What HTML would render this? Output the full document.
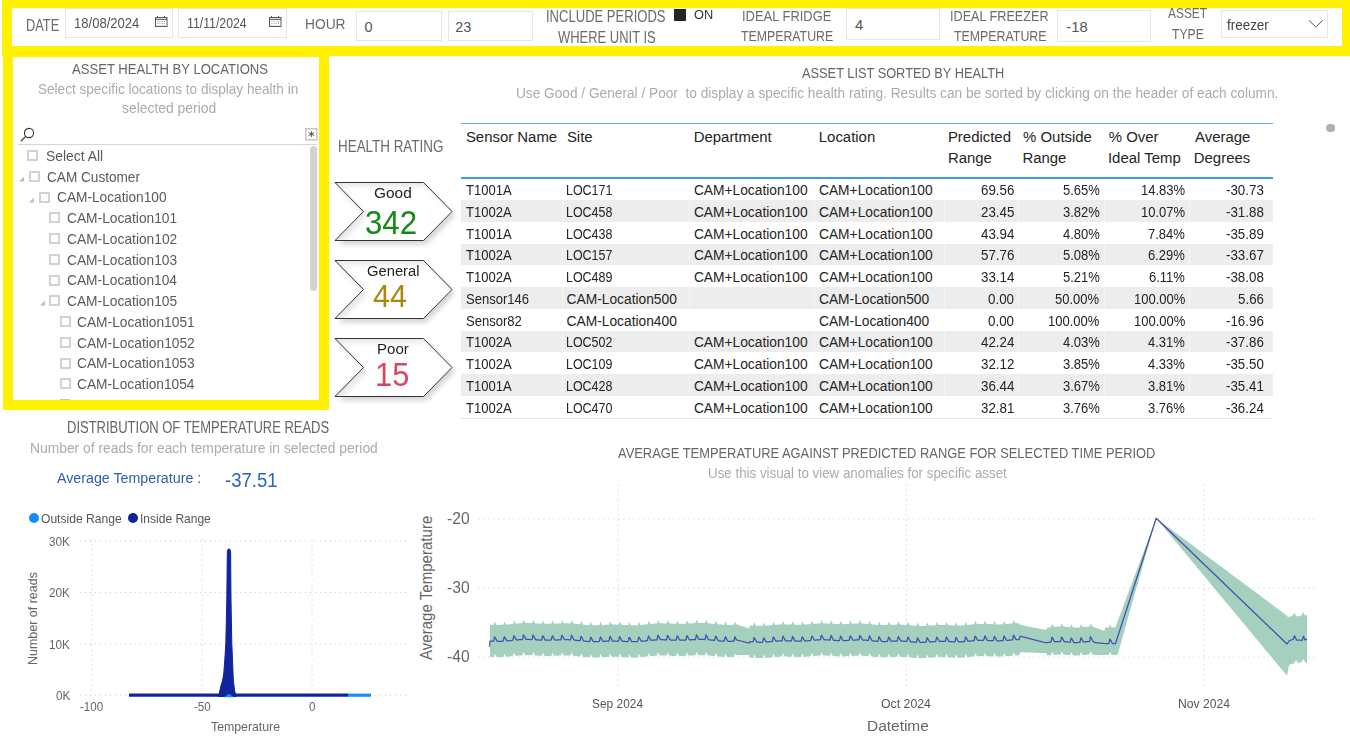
<!DOCTYPE html>
<html><head><meta charset="utf-8"><style>
html,body{margin:0;padding:0;width:1350px;height:740px;overflow:hidden;background:#fff}
.t{position:absolute;white-space:nowrap;line-height:0;font-family:"Liberation Sans",sans-serif;transform-origin:0 0}
.r{position:absolute}
svg{position:absolute;overflow:visible}
</style></head><body>
<div class="r" style="left:2px;top:0px;width:1348px;height:56px;background:#FFF100"></div>
<div class="r" style="left:12px;top:8px;width:1330px;height:38px;background:#fff"></div>
<div class="r" style="left:3px;top:46px;width:326px;height:364px;background:#FFF100"></div>
<div class="r" style="left:13px;top:56.5px;width:306px;height:343.5px;background:#fff"></div>
<div class="t" style="left:26.38px;top:26.00px;font-size:15.94px;color:#6b6b6b;transform:scaleX(0.8025);">DATE</div>
<div class="r" style="left:65px;top:8px;width:108px;height:30px;border:1px solid #e6e6e6;box-sizing:border-box;background:#fff"></div>
<div class="t" style="left:73.72px;top:23.00px;font-size:14.49px;color:#555;transform:scaleX(0.9012);">18/08/2024</div>
<div class="r" style="left:178px;top:8px;width:108.5px;height:30px;border:1px solid #e6e6e6;box-sizing:border-box;background:#fff"></div>
<div class="t" style="left:187.38px;top:23.00px;font-size:14.49px;color:#555;transform:scaleX(0.8483);">11/11/2024</div>
<div class="t" style="left:304.90px;top:24.00px;font-size:14.78px;color:#6b6b6b;transform:scaleX(0.9324);">HOUR</div>
<div class="r" style="left:356px;top:11px;width:86px;height:30px;border:1px solid #e6e6e6;box-sizing:border-box;background:#fff"></div>
<div class="t" style="left:364.42px;top:27.00px;font-size:14.49px;color:#555;">0</div>
<div class="r" style="left:447.5px;top:11px;width:85.5px;height:30px;border:1px solid #e6e6e6;box-sizing:border-box;background:#fff"></div>
<div class="t" style="left:455.28px;top:27.00px;font-size:14.49px;color:#555;">23</div>
<div class="t" style="left:546.23px;top:17.00px;font-size:15.94px;color:#6b6b6b;transform:scaleX(0.8183);">INCLUDE PERIODS</div>
<div class="t" style="left:557.74px;top:38.00px;font-size:15.94px;color:#6b6b6b;transform:scaleX(0.8129);">WHERE UNIT IS</div>
<div class="r" style="left:674px;top:9px;width:12px;height:12px;background:#252525"></div>
<div class="t" style="left:694.42px;top:15.00px;font-size:13.48px;color:#333;transform:scaleX(0.9497);">ON</div>
<div class="t" style="left:741.63px;top:16.00px;font-size:15.36px;color:#6b6b6b;transform:scaleX(0.8426);">IDEAL FRIDGE</div>
<div class="t" style="left:741.35px;top:36.00px;font-size:15.36px;color:#6b6b6b;transform:scaleX(0.8018);">TEMPERATURE</div>
<div class="r" style="left:846px;top:8px;width:93.5px;height:31.5px;border:1px solid #e6e6e6;box-sizing:border-box;background:#fff"></div>
<div class="t" style="left:854.90px;top:25.00px;font-size:14.78px;color:#555;">4</div>
<div class="t" style="left:950.46px;top:16.00px;font-size:15.36px;color:#6b6b6b;transform:scaleX(0.8226);">IDEAL FREEZER</div>
<div class="t" style="left:954.15px;top:36.00px;font-size:15.36px;color:#6b6b6b;transform:scaleX(0.8053);">TEMPERATURE</div>
<div class="r" style="left:1057px;top:10px;width:94px;height:32px;border:1px solid #e6e6e6;box-sizing:border-box;background:#fff"></div>
<div class="t" style="left:1066.33px;top:27.00px;font-size:14.78px;color:#555;">-18</div>
<div class="t" style="left:1167.80px;top:13.00px;font-size:15.36px;color:#6b6b6b;transform:scaleX(0.7767);">ASSET</div>
<div class="t" style="left:1171.96px;top:34.00px;font-size:15.36px;color:#6b6b6b;transform:scaleX(0.7939);">TYPE</div>
<div class="r" style="left:1221px;top:10px;width:107px;height:27.5px;border:1px solid #e6e6e6;box-sizing:border-box;background:#fff"></div>
<div class="r" style="left:2px;top:0px;width:1348px;height:8px;background:#FFF100"></div>
<div class="t" style="left:1227.20px;top:25.00px;font-size:14.49px;color:#444;transform:scaleX(0.9275);">freezer</div>
<svg style="left:155px;top:16px" width="14" height="12" viewBox="0 0 14 12"><rect x="0.5" y="1.5" width="11.5" height="9" fill="none" stroke="#5a5a5a" stroke-width="1"/><line x1="0.5" y1="3.3" x2="12" y2="3.3" stroke="#444" stroke-width="1"/><line x1="2.5" y1="0" x2="2.5" y2="2" stroke="#5a5a5a" stroke-width="1"/><line x1="9.5" y1="0" x2="9.5" y2="2" stroke="#5a5a5a" stroke-width="1"/><line x1="2.8" y1="5" x2="2.8" y2="9.5" stroke="#8a8a9a" stroke-width="0.8" stroke-dasharray="1 1"/><line x1="5.0" y1="5" x2="5.0" y2="9.5" stroke="#8a8a9a" stroke-width="0.8" stroke-dasharray="1 1"/><line x1="7.2" y1="5" x2="7.2" y2="9.5" stroke="#8a8a9a" stroke-width="0.8" stroke-dasharray="1 1"/><line x1="9.4" y1="5" x2="9.4" y2="9.5" stroke="#8a8a9a" stroke-width="0.8" stroke-dasharray="1 1"/></svg>
<svg style="left:269px;top:16px" width="14" height="12" viewBox="0 0 14 12"><rect x="0.5" y="1.5" width="11.5" height="9" fill="none" stroke="#5a5a5a" stroke-width="1"/><line x1="0.5" y1="3.3" x2="12" y2="3.3" stroke="#444" stroke-width="1"/><line x1="2.5" y1="0" x2="2.5" y2="2" stroke="#5a5a5a" stroke-width="1"/><line x1="9.5" y1="0" x2="9.5" y2="2" stroke="#5a5a5a" stroke-width="1"/><line x1="2.8" y1="5" x2="2.8" y2="9.5" stroke="#8a8a9a" stroke-width="0.8" stroke-dasharray="1 1"/><line x1="5.0" y1="5" x2="5.0" y2="9.5" stroke="#8a8a9a" stroke-width="0.8" stroke-dasharray="1 1"/><line x1="7.2" y1="5" x2="7.2" y2="9.5" stroke="#8a8a9a" stroke-width="0.8" stroke-dasharray="1 1"/><line x1="9.4" y1="5" x2="9.4" y2="9.5" stroke="#8a8a9a" stroke-width="0.8" stroke-dasharray="1 1"/></svg>
<svg style="left:1305px;top:16px" width="22" height="14"><polyline points="4,4.5 10.8,11 17.6,4.5" fill="none" stroke="#555" stroke-width="1"/></svg>
<div class="t" style="left:71.75px;top:69.00px;font-size:14.49px;color:#666;transform:scaleX(0.9029);">ASSET HEALTH BY LOCATIONS</div>
<div class="t" style="left:38.39px;top:89.00px;font-size:14.78px;color:#ababab;transform:scaleX(0.9190);">Select specific locations to display health in</div>
<div class="t" style="left:121.58px;top:108.00px;font-size:14.78px;color:#ababab;transform:scaleX(0.9411);">selected period</div>
<svg style="left:19px;top:126px" width="18" height="18"><circle cx="10" cy="7" r="4.6" fill="none" stroke="#333" stroke-width="1.1"/><line x1="6.7" y1="10.3" x2="2" y2="15" stroke="#333" stroke-width="1.2"/></svg>
<svg style="left:305px;top:128px" width="14" height="14"><rect x="0.75" y="0.75" width="11" height="11" fill="#fff" stroke="#c6c6c6" stroke-width="1.5"/><path d="M6.4 3.2V9M3.6 4.5L9.2 7.7M3.6 7.7L9.2 4.5" stroke="#444" stroke-width="0.9"/></svg>
<div class="r" style="left:18px;top:144px;width:299px;height:1px;background:#d6d6d6"></div>
<div class="r" style="left:27px;top:150px;width:11px;height:11px;border:2px solid #d2d2d2;box-sizing:border-box"></div>
<div class="t" style="left:45.67px;top:156.00px;font-size:14.20px;color:#5a5a5a;transform:scaleX(0.9787);">Select All</div>
<div class="r" style="left:29px;top:171px;width:11px;height:11px;border:2px solid #d2d2d2;box-sizing:border-box"></div>
<svg style="left:18.0px;top:175.5px" width="8" height="8"><polygon points="6,0.5 6,5.5 1,5.5" fill="#c0c0c0"/></svg>
<div class="t" style="left:46.52px;top:177.00px;font-size:14.20px;color:#5a5a5a;transform:scaleX(0.9586);">CAM Customer</div>
<div class="r" style="left:39px;top:192px;width:11px;height:11px;border:2px solid #d2d2d2;box-sizing:border-box"></div>
<svg style="left:28.3px;top:196.5px" width="8" height="8"><polygon points="6,0.5 6,5.5 1,5.5" fill="#c0c0c0"/></svg>
<div class="t" style="left:56.82px;top:197.00px;font-size:14.20px;color:#5a5a5a;transform:scaleX(0.9646);">CAM-Location100</div>
<div class="r" style="left:49px;top:212px;width:11px;height:11px;border:2px solid #d2d2d2;box-sizing:border-box"></div>
<div class="t" style="left:67.11px;top:218.00px;font-size:14.20px;color:#5a5a5a;transform:scaleX(0.9702);">CAM-Location101</div>
<div class="r" style="left:49px;top:233px;width:11px;height:11px;border:2px solid #d2d2d2;box-sizing:border-box"></div>
<div class="t" style="left:67.11px;top:239.00px;font-size:14.20px;color:#5a5a5a;transform:scaleX(0.9708);">CAM-Location102</div>
<div class="r" style="left:49px;top:254px;width:11px;height:11px;border:2px solid #d2d2d2;box-sizing:border-box"></div>
<div class="t" style="left:67.11px;top:260.00px;font-size:14.20px;color:#5a5a5a;transform:scaleX(0.9696);">CAM-Location103</div>
<div class="r" style="left:49px;top:275px;width:11px;height:11px;border:2px solid #d2d2d2;box-sizing:border-box"></div>
<div class="t" style="left:67.11px;top:280.00px;font-size:14.20px;color:#5a5a5a;transform:scaleX(0.9684);">CAM-Location104</div>
<div class="r" style="left:49px;top:295px;width:11px;height:11px;border:2px solid #d2d2d2;box-sizing:border-box"></div>
<svg style="left:38.6px;top:300.1px" width="8" height="8"><polygon points="6,0.5 6,5.5 1,5.5" fill="#c0c0c0"/></svg>
<div class="t" style="left:67.11px;top:301.00px;font-size:14.20px;color:#5a5a5a;transform:scaleX(0.9696);">CAM-Location105</div>
<div class="r" style="left:60px;top:316px;width:11px;height:11px;border:2px solid #d2d2d2;box-sizing:border-box"></div>
<div class="t" style="left:77.41px;top:322.00px;font-size:14.20px;color:#5a5a5a;transform:scaleX(0.9690);">CAM-Location1051</div>
<div class="r" style="left:60px;top:337px;width:11px;height:11px;border:2px solid #d2d2d2;box-sizing:border-box"></div>
<div class="t" style="left:77.41px;top:343.00px;font-size:14.20px;color:#5a5a5a;transform:scaleX(0.9696);">CAM-Location1052</div>
<div class="r" style="left:60px;top:358px;width:11px;height:11px;border:2px solid #d2d2d2;box-sizing:border-box"></div>
<div class="t" style="left:77.41px;top:363.00px;font-size:14.20px;color:#5a5a5a;transform:scaleX(0.9684);">CAM-Location1053</div>
<div class="r" style="left:60px;top:378px;width:11px;height:11px;border:2px solid #d2d2d2;box-sizing:border-box"></div>
<div class="t" style="left:77.41px;top:384.00px;font-size:14.20px;color:#5a5a5a;transform:scaleX(0.9673);">CAM-Location1054</div>
<div class="r" style="left:59.5px;top:399px;width:10px;height:1.5px;background:#c4c4c4"></div>
<div class="r" style="left:310px;top:146px;width:7px;height:145px;background:#d2d2d2;border-radius:3.5px"></div>
<div class="r" style="left:3px;top:400px;width:326px;height:10px;background:#FFF100"></div>
<div class="t" style="left:337.83px;top:147.00px;font-size:15.94px;color:#6b6b6b;transform:scaleX(0.8415);">HEALTH RATING</div>
<svg style="left:0;top:0" width="1350" height="740"><defs><filter id="sh" x="-20%" y="-20%" width="150%" height="160%"><feGaussianBlur in="SourceAlpha" stdDeviation="2.6"/><feOffset dx="3" dy="4"/><feComponentTransfer><feFuncA type="linear" slope="0.17"/></feComponentTransfer><feMerge><feMergeNode/><feMergeNode in="SourceGraphic"/></feMerge></filter><filter id="ish" x="-10%" y="-10%" width="120%" height="120%"><feGaussianBlur in="SourceAlpha" stdDeviation="2.5"/><feOffset dx="4" dy="4" result="b"/><feComposite in="SourceAlpha" in2="b" operator="out" result="e"/><feFlood flood-color="#000" flood-opacity="0.09"/><feComposite in2="e" operator="in"/></filter></defs><polygon filter="url(#sh)" points="335,182.5 423.5,182.5 452,211.5 423.5,240.5 335,240.5 363.5,211.5" fill="#fff"/><polygon filter="url(#ish)" points="335,182.5 423.5,182.5 452,211.5 423.5,240.5 335,240.5 363.5,211.5" fill="#000"/><polygon points="335,182.5 423.5,182.5 452,211.5 423.5,240.5 335,240.5 363.5,211.5" fill="none" stroke="#333" stroke-width="1"/><polygon filter="url(#sh)" points="335,260.5 423.5,260.5 452,289.5 423.5,318.5 335,318.5 363.5,289.5" fill="#fff"/><polygon filter="url(#ish)" points="335,260.5 423.5,260.5 452,289.5 423.5,318.5 335,318.5 363.5,289.5" fill="#000"/><polygon points="335,260.5 423.5,260.5 452,289.5 423.5,318.5 335,318.5 363.5,289.5" fill="none" stroke="#333" stroke-width="1"/><polygon filter="url(#sh)" points="335,338.5 423.5,338.5 452,367.5 423.5,396.5 335,396.5 363.5,367.5" fill="#fff"/><polygon filter="url(#ish)" points="335,338.5 423.5,338.5 452,367.5 423.5,396.5 335,396.5 363.5,367.5" fill="#000"/><polygon points="335,338.5 423.5,338.5 452,367.5 423.5,396.5 335,396.5 363.5,367.5" fill="none" stroke="#333" stroke-width="1"/></svg>
<div class="t" style="left:374.23px;top:193.00px;font-size:14.93px;color:#252423;transform:scaleX(1.0350);">Good</div>
<div class="t" style="left:364.95px;top:223.00px;font-size:33.19px;color:#138a13;transform:scaleX(0.9412);">342</div>
<div class="t" style="left:366.76px;top:271.00px;font-size:14.93px;color:#252423;transform:scaleX(0.9893);">General</div>
<div class="t" style="left:372.99px;top:296.00px;font-size:31.88px;color:#a8880e;transform:scaleX(0.9587);">44</div>
<div class="t" style="left:376.70px;top:349.00px;font-size:14.93px;color:#252423;transform:scaleX(1.0073);">Poor</div>
<div class="t" style="left:375.19px;top:375.00px;font-size:33.19px;color:#d8465f;transform:scaleX(0.9297);">15</div>
<div class="t" style="left:801.60px;top:73.00px;font-size:14.78px;color:#666;transform:scaleX(0.8667);">ASSET LIST SORTED BY HEALTH</div>
<div class="t" style="left:515.97px;top:93.00px;font-size:15.22px;color:#ababab;transform:scaleX(0.8985);">Use Good / General / Poor  to display a specific health rating. Results can be sorted by clicking on the header of each column.</div>
<div class="r" style="left:461px;top:123px;width:812px;height:1px;background:#5aa9f2"></div>
<div class="r" style="left:461px;top:177px;width:812px;height:2.3000000000000114px;background:#3a98ee"></div>
<div class="t" style="left:465.93px;top:137.00px;font-size:14.93px;color:#252423;">Sensor Name</div>
<div class="t" style="left:566.93px;top:137.00px;font-size:14.93px;color:#252423;">Site</div>
<div class="t" style="left:693.71px;top:137.00px;font-size:14.93px;color:#252423;">Department</div>
<div class="t" style="left:818.81px;top:137.00px;font-size:14.93px;color:#252423;">Location</div>
<div class="t" style="left:947.91px;top:137.00px;font-size:14.93px;color:#252423;">Predicted</div>
<div class="t" style="left:947.91px;top:158.00px;font-size:14.93px;color:#252423;">Range</div>
<div class="t" style="left:1023.08px;top:137.00px;font-size:14.93px;color:#252423;">% Outside</div>
<div class="t" style="left:1022.41px;top:158.00px;font-size:14.93px;color:#252423;">Range</div>
<div class="t" style="left:1108.78px;top:137.00px;font-size:14.93px;color:#252423;">% Over</div>
<div class="t" style="left:1107.96px;top:158.00px;font-size:14.93px;color:#252423;">Ideal Temp</div>
<div class="t" style="left:1195.00px;top:137.00px;font-size:14.93px;color:#252423;">Average</div>
<div class="t" style="left:1193.81px;top:158.00px;font-size:14.93px;color:#252423;">Degrees</div>
<div class="t" style="left:466.04px;top:191.00px;font-size:13.77px;color:#252423;transform:scaleX(0.9470);">T1001A</div>
<div class="t" style="left:566.30px;top:191.00px;font-size:13.77px;color:#252423;transform:scaleX(0.9050);">LOC171</div>
<div class="t" style="left:693.91px;top:191.00px;font-size:13.77px;color:#252423;">CAM+Location100</div>
<div class="t" style="left:819.01px;top:191.00px;font-size:13.77px;color:#252423;">CAM+Location100</div>
<div class="t" style="left:980.65px;top:191.00px;font-size:13.77px;color:#252423;transform:scaleX(0.9700);">69.56</div>
<div class="t" style="left:1062.77px;top:191.00px;font-size:13.77px;color:#252423;transform:scaleX(0.9450);">5.65%</div>
<div class="t" style="left:1141.18px;top:191.00px;font-size:13.77px;color:#252423;transform:scaleX(0.9450);">14.83%</div>
<div class="t" style="left:1225.67px;top:191.00px;font-size:13.77px;color:#252423;transform:scaleX(0.9700);">-30.73</div>
<div class="r" style="left:461px;top:200.0px;width:812px;height:21.75px;background:#ededed"></div>
<div class="r" style="left:562px;top:200.0px;width:1px;height:21.75px;background:#f6f6f6"></div>
<div class="r" style="left:689.3px;top:200.0px;width:1.0px;height:21.75px;background:#f6f6f6"></div>
<div class="r" style="left:814.4px;top:200.0px;width:1.0px;height:21.75px;background:#f6f6f6"></div>
<div class="r" style="left:943.5px;top:200.0px;width:1.0px;height:21.75px;background:#f6f6f6"></div>
<div class="r" style="left:1018px;top:200.0px;width:1px;height:21.75px;background:#f6f6f6"></div>
<div class="r" style="left:1103.7px;top:200.0px;width:1.0px;height:21.75px;background:#f6f6f6"></div>
<div class="r" style="left:1189.4px;top:200.0px;width:1.0px;height:21.75px;background:#f6f6f6"></div>
<div class="t" style="left:466.04px;top:213.00px;font-size:13.77px;color:#252423;transform:scaleX(0.9470);">T1002A</div>
<div class="t" style="left:566.30px;top:213.00px;font-size:13.77px;color:#252423;transform:scaleX(0.9050);">LOC458</div>
<div class="t" style="left:693.91px;top:213.00px;font-size:13.77px;color:#252423;">CAM+Location100</div>
<div class="t" style="left:819.01px;top:213.00px;font-size:13.77px;color:#252423;">CAM+Location100</div>
<div class="t" style="left:980.65px;top:213.00px;font-size:13.77px;color:#252423;transform:scaleX(0.9700);">23.45</div>
<div class="t" style="left:1062.77px;top:213.00px;font-size:13.77px;color:#252423;transform:scaleX(0.9450);">3.82%</div>
<div class="t" style="left:1141.18px;top:213.00px;font-size:13.77px;color:#252423;transform:scaleX(0.9450);">10.07%</div>
<div class="t" style="left:1225.67px;top:213.00px;font-size:13.77px;color:#252423;transform:scaleX(0.9700);">-31.88</div>
<div class="t" style="left:466.04px;top:235.00px;font-size:13.77px;color:#252423;transform:scaleX(0.9470);">T1001A</div>
<div class="t" style="left:566.30px;top:235.00px;font-size:13.77px;color:#252423;transform:scaleX(0.9050);">LOC438</div>
<div class="t" style="left:693.91px;top:235.00px;font-size:13.77px;color:#252423;">CAM+Location100</div>
<div class="t" style="left:819.01px;top:235.00px;font-size:13.77px;color:#252423;">CAM+Location100</div>
<div class="t" style="left:980.51px;top:235.00px;font-size:13.77px;color:#252423;transform:scaleX(0.9700);">43.94</div>
<div class="t" style="left:1062.77px;top:235.00px;font-size:13.77px;color:#252423;transform:scaleX(0.9450);">4.80%</div>
<div class="t" style="left:1148.47px;top:235.00px;font-size:13.77px;color:#252423;transform:scaleX(0.9450);">7.84%</div>
<div class="t" style="left:1225.74px;top:235.00px;font-size:13.77px;color:#252423;transform:scaleX(0.9700);">-35.89</div>
<div class="r" style="left:461px;top:243.5px;width:812px;height:21.75px;background:#ededed"></div>
<div class="r" style="left:562px;top:243.5px;width:1px;height:21.75px;background:#f6f6f6"></div>
<div class="r" style="left:689.3px;top:243.5px;width:1.0px;height:21.75px;background:#f6f6f6"></div>
<div class="r" style="left:814.4px;top:243.5px;width:1.0px;height:21.75px;background:#f6f6f6"></div>
<div class="r" style="left:943.5px;top:243.5px;width:1.0px;height:21.75px;background:#f6f6f6"></div>
<div class="r" style="left:1018px;top:243.5px;width:1px;height:21.75px;background:#f6f6f6"></div>
<div class="r" style="left:1103.7px;top:243.5px;width:1.0px;height:21.75px;background:#f6f6f6"></div>
<div class="r" style="left:1189.4px;top:243.5px;width:1.0px;height:21.75px;background:#f6f6f6"></div>
<div class="t" style="left:466.04px;top:256.00px;font-size:13.77px;color:#252423;transform:scaleX(0.9470);">T1002A</div>
<div class="t" style="left:566.30px;top:256.00px;font-size:13.77px;color:#252423;transform:scaleX(0.9050);">LOC157</div>
<div class="t" style="left:693.91px;top:256.00px;font-size:13.77px;color:#252423;">CAM+Location100</div>
<div class="t" style="left:819.01px;top:256.00px;font-size:13.77px;color:#252423;">CAM+Location100</div>
<div class="t" style="left:980.65px;top:256.00px;font-size:13.77px;color:#252423;transform:scaleX(0.9700);">57.76</div>
<div class="t" style="left:1062.77px;top:256.00px;font-size:13.77px;color:#252423;transform:scaleX(0.9450);">5.08%</div>
<div class="t" style="left:1148.47px;top:256.00px;font-size:13.77px;color:#252423;transform:scaleX(0.9450);">6.29%</div>
<div class="t" style="left:1225.81px;top:256.00px;font-size:13.77px;color:#252423;transform:scaleX(0.9700);">-33.67</div>
<div class="t" style="left:466.04px;top:278.00px;font-size:13.77px;color:#252423;transform:scaleX(0.9470);">T1002A</div>
<div class="t" style="left:566.30px;top:278.00px;font-size:13.77px;color:#252423;transform:scaleX(0.9050);">LOC489</div>
<div class="t" style="left:693.91px;top:278.00px;font-size:13.77px;color:#252423;">CAM+Location100</div>
<div class="t" style="left:819.01px;top:278.00px;font-size:13.77px;color:#252423;">CAM+Location100</div>
<div class="t" style="left:980.51px;top:278.00px;font-size:13.77px;color:#252423;transform:scaleX(0.9700);">33.14</div>
<div class="t" style="left:1062.77px;top:278.00px;font-size:13.77px;color:#252423;transform:scaleX(0.9450);">5.21%</div>
<div class="t" style="left:1149.45px;top:278.00px;font-size:13.77px;color:#252423;transform:scaleX(0.9450);">6.11%</div>
<div class="t" style="left:1225.67px;top:278.00px;font-size:13.77px;color:#252423;transform:scaleX(0.9700);">-38.08</div>
<div class="r" style="left:461px;top:287.0px;width:812px;height:21.75px;background:#ededed"></div>
<div class="r" style="left:562px;top:287.0px;width:1px;height:21.75px;background:#f6f6f6"></div>
<div class="r" style="left:689.3px;top:287.0px;width:1.0px;height:21.75px;background:#f6f6f6"></div>
<div class="r" style="left:814.4px;top:287.0px;width:1.0px;height:21.75px;background:#f6f6f6"></div>
<div class="r" style="left:943.5px;top:287.0px;width:1.0px;height:21.75px;background:#f6f6f6"></div>
<div class="r" style="left:1018px;top:287.0px;width:1px;height:21.75px;background:#f6f6f6"></div>
<div class="r" style="left:1103.7px;top:287.0px;width:1.0px;height:21.75px;background:#f6f6f6"></div>
<div class="r" style="left:1189.4px;top:287.0px;width:1.0px;height:21.75px;background:#f6f6f6"></div>
<div class="t" style="left:465.71px;top:300.00px;font-size:13.77px;color:#252423;transform:scaleX(0.9470);">Sensor146</div>
<div class="t" style="left:566.61px;top:300.00px;font-size:13.77px;color:#252423;">CAM-Location500</div>
<div class="t" style="left:819.01px;top:300.00px;font-size:13.77px;color:#252423;">CAM-Location500</div>
<div class="t" style="left:987.99px;top:300.00px;font-size:13.77px;color:#252423;transform:scaleX(0.9700);">0.00</div>
<div class="t" style="left:1055.48px;top:300.00px;font-size:13.77px;color:#252423;transform:scaleX(0.9450);">50.00%</div>
<div class="t" style="left:1133.96px;top:300.00px;font-size:13.77px;color:#252423;transform:scaleX(0.9450);">100.00%</div>
<div class="t" style="left:1237.56px;top:300.00px;font-size:13.77px;color:#252423;transform:scaleX(0.9700);">5.66</div>
<div class="t" style="left:465.71px;top:322.00px;font-size:13.77px;color:#252423;transform:scaleX(0.9470);">Sensor82</div>
<div class="t" style="left:566.61px;top:322.00px;font-size:13.77px;color:#252423;">CAM-Location400</div>
<div class="t" style="left:819.01px;top:322.00px;font-size:13.77px;color:#252423;">CAM-Location400</div>
<div class="t" style="left:987.99px;top:322.00px;font-size:13.77px;color:#252423;transform:scaleX(0.9700);">0.00</div>
<div class="t" style="left:1048.26px;top:322.00px;font-size:13.77px;color:#252423;transform:scaleX(0.9450);">100.00%</div>
<div class="t" style="left:1133.96px;top:322.00px;font-size:13.77px;color:#252423;transform:scaleX(0.9450);">100.00%</div>
<div class="t" style="left:1225.67px;top:322.00px;font-size:13.77px;color:#252423;transform:scaleX(0.9700);">-16.96</div>
<div class="r" style="left:461px;top:330.5px;width:812px;height:21.75px;background:#ededed"></div>
<div class="r" style="left:562px;top:330.5px;width:1px;height:21.75px;background:#f6f6f6"></div>
<div class="r" style="left:689.3px;top:330.5px;width:1.0px;height:21.75px;background:#f6f6f6"></div>
<div class="r" style="left:814.4px;top:330.5px;width:1.0px;height:21.75px;background:#f6f6f6"></div>
<div class="r" style="left:943.5px;top:330.5px;width:1.0px;height:21.75px;background:#f6f6f6"></div>
<div class="r" style="left:1018px;top:330.5px;width:1px;height:21.75px;background:#f6f6f6"></div>
<div class="r" style="left:1103.7px;top:330.5px;width:1.0px;height:21.75px;background:#f6f6f6"></div>
<div class="r" style="left:1189.4px;top:330.5px;width:1.0px;height:21.75px;background:#f6f6f6"></div>
<div class="t" style="left:466.04px;top:343.00px;font-size:13.77px;color:#252423;transform:scaleX(0.9470);">T1002A</div>
<div class="t" style="left:566.30px;top:343.00px;font-size:13.77px;color:#252423;transform:scaleX(0.9050);">LOC502</div>
<div class="t" style="left:693.91px;top:343.00px;font-size:13.77px;color:#252423;">CAM+Location100</div>
<div class="t" style="left:819.01px;top:343.00px;font-size:13.77px;color:#252423;">CAM+Location100</div>
<div class="t" style="left:980.51px;top:343.00px;font-size:13.77px;color:#252423;transform:scaleX(0.9700);">42.24</div>
<div class="t" style="left:1062.77px;top:343.00px;font-size:13.77px;color:#252423;transform:scaleX(0.9450);">4.03%</div>
<div class="t" style="left:1148.47px;top:343.00px;font-size:13.77px;color:#252423;transform:scaleX(0.9450);">4.31%</div>
<div class="t" style="left:1225.67px;top:343.00px;font-size:13.77px;color:#252423;transform:scaleX(0.9700);">-37.86</div>
<div class="t" style="left:466.04px;top:365.00px;font-size:13.77px;color:#252423;transform:scaleX(0.9470);">T1002A</div>
<div class="t" style="left:566.30px;top:365.00px;font-size:13.77px;color:#252423;transform:scaleX(0.9050);">LOC109</div>
<div class="t" style="left:693.91px;top:365.00px;font-size:13.77px;color:#252423;">CAM+Location100</div>
<div class="t" style="left:819.01px;top:365.00px;font-size:13.77px;color:#252423;">CAM+Location100</div>
<div class="t" style="left:980.78px;top:365.00px;font-size:13.77px;color:#252423;transform:scaleX(0.9700);">32.12</div>
<div class="t" style="left:1062.77px;top:365.00px;font-size:13.77px;color:#252423;transform:scaleX(0.9450);">3.85%</div>
<div class="t" style="left:1148.47px;top:365.00px;font-size:13.77px;color:#252423;transform:scaleX(0.9450);">4.33%</div>
<div class="t" style="left:1225.61px;top:365.00px;font-size:13.77px;color:#252423;transform:scaleX(0.9700);">-35.50</div>
<div class="r" style="left:461px;top:374.0px;width:812px;height:21.75px;background:#ededed"></div>
<div class="r" style="left:562px;top:374.0px;width:1px;height:21.75px;background:#f6f6f6"></div>
<div class="r" style="left:689.3px;top:374.0px;width:1.0px;height:21.75px;background:#f6f6f6"></div>
<div class="r" style="left:814.4px;top:374.0px;width:1.0px;height:21.75px;background:#f6f6f6"></div>
<div class="r" style="left:943.5px;top:374.0px;width:1.0px;height:21.75px;background:#f6f6f6"></div>
<div class="r" style="left:1018px;top:374.0px;width:1px;height:21.75px;background:#f6f6f6"></div>
<div class="r" style="left:1103.7px;top:374.0px;width:1.0px;height:21.75px;background:#f6f6f6"></div>
<div class="r" style="left:1189.4px;top:374.0px;width:1.0px;height:21.75px;background:#f6f6f6"></div>
<div class="t" style="left:466.04px;top:387.00px;font-size:13.77px;color:#252423;transform:scaleX(0.9470);">T1001A</div>
<div class="t" style="left:566.30px;top:387.00px;font-size:13.77px;color:#252423;transform:scaleX(0.9050);">LOC428</div>
<div class="t" style="left:693.91px;top:387.00px;font-size:13.77px;color:#252423;">CAM+Location100</div>
<div class="t" style="left:819.01px;top:387.00px;font-size:13.77px;color:#252423;">CAM+Location100</div>
<div class="t" style="left:980.51px;top:387.00px;font-size:13.77px;color:#252423;transform:scaleX(0.9700);">36.44</div>
<div class="t" style="left:1062.77px;top:387.00px;font-size:13.77px;color:#252423;transform:scaleX(0.9450);">3.67%</div>
<div class="t" style="left:1148.47px;top:387.00px;font-size:13.77px;color:#252423;transform:scaleX(0.9450);">3.81%</div>
<div class="t" style="left:1225.74px;top:387.00px;font-size:13.77px;color:#252423;transform:scaleX(0.9700);">-35.41</div>
<div class="t" style="left:466.04px;top:409.00px;font-size:13.77px;color:#252423;transform:scaleX(0.9470);">T1002A</div>
<div class="t" style="left:566.30px;top:409.00px;font-size:13.77px;color:#252423;transform:scaleX(0.9050);">LOC470</div>
<div class="t" style="left:693.91px;top:409.00px;font-size:13.77px;color:#252423;">CAM+Location100</div>
<div class="t" style="left:819.01px;top:409.00px;font-size:13.77px;color:#252423;">CAM+Location100</div>
<div class="t" style="left:980.71px;top:409.00px;font-size:13.77px;color:#252423;transform:scaleX(0.9700);">32.81</div>
<div class="t" style="left:1062.77px;top:409.00px;font-size:13.77px;color:#252423;transform:scaleX(0.9450);">3.76%</div>
<div class="t" style="left:1148.47px;top:409.00px;font-size:13.77px;color:#252423;transform:scaleX(0.9450);">3.76%</div>
<div class="t" style="left:1225.54px;top:409.00px;font-size:13.77px;color:#252423;transform:scaleX(0.9700);">-36.24</div>
<div class="r" style="left:461px;top:417.5px;width:812px;height:1.0px;background:#e4e4e4"></div>
<div class="r" style="left:1326px;top:123.5px;width:8.6px;height:8.6px;border-radius:50%;background:#b0b0b0"></div>
<div class="t" style="left:67.46px;top:428.00px;font-size:15.65px;color:#666;transform:scaleX(0.8303);">DISTRIBUTION OF TEMPERATURE READS</div>
<div class="t" style="left:29.99px;top:448.00px;font-size:15.07px;color:#ababab;transform:scaleX(0.9190);">Number of reads for each temperature in selected period</div>
<div class="t" style="left:57.00px;top:478.00px;font-size:15.07px;color:#2f5cae;transform:scaleX(0.9445);">Average Temperature :</div>
<div class="t" style="left:225.16px;top:480.00px;font-size:20.58px;color:#2866c0;transform:scaleX(0.9028);">-37.51</div>
<div class="r" style="left:28.9px;top:513px;width:10px;height:10px;border-radius:50%;background:#118dff"></div>
<div class="t" style="left:41.36px;top:519.00px;font-size:12.46px;color:#555;transform:scaleX(0.9706);">Outside Range</div>
<div class="r" style="left:127.5px;top:513px;width:10px;height:10px;border-radius:50%;background:#12239e"></div>
<div class="t" style="left:139.62px;top:519.00px;font-size:12.46px;color:#555;transform:scaleX(0.9647);">Inside Range</div>
<svg style="left:0;top:0" width="1350" height="740"><line x1="80" y1="541.1" x2="407.6" y2="541.1" stroke="#c8c8c8" stroke-width="1" stroke-dasharray="1 4" fill="none"/><line x1="80" y1="592.5" x2="407.6" y2="592.5" stroke="#c8c8c8" stroke-width="1" stroke-dasharray="1 4" fill="none"/><line x1="80" y1="643.8" x2="407.6" y2="643.8" stroke="#c8c8c8" stroke-width="1" stroke-dasharray="1 4" fill="none"/><line x1="80" y1="695.2" x2="407.6" y2="695.2" stroke="#c8c8c8" stroke-width="1" stroke-dasharray="1 4" fill="none"/><line x1="91.7" y1="539.5" x2="91.7" y2="695" stroke="#c8c8c8" stroke-width="1" stroke-dasharray="1 4" fill="none"/><line x1="202.2" y1="539.5" x2="202.2" y2="695" stroke="#c8c8c8" stroke-width="1" stroke-dasharray="1 4" fill="none"/><line x1="312" y1="539.5" x2="312" y2="695" stroke="#c8c8c8" stroke-width="1" stroke-dasharray="1 4" fill="none"/><polyline points="129,695.2 348,695.2" stroke="#12239e" stroke-width="3.2" fill="none"/><polyline points="348,695.2 371,695.2" stroke="#118dff" stroke-width="3.2" fill="none"/><polygon points="218.5,696.5 220,690 221.2,685 222.5,681 223.8,673 224.8,660 225.8,643.8 226.8,600 227.3,551.5 228.2,549 229.6,549 230.6,551.5 231,600 231.8,643.8 232.5,660 233.3,680 234.5,690 236,696.5" fill="#12239e" stroke="#12239e" stroke-width="1" stroke-linejoin="round"/><polygon points="224,697.2 229,693.8 234,697.2" fill="#118dff"/></svg>
<div class="t" style="left:49.48px;top:542.00px;font-size:13.04px;color:#666;transform:scaleX(0.9000);">30K</div>
<div class="t" style="left:49.48px;top:593.00px;font-size:13.04px;color:#666;transform:scaleX(0.9000);">20K</div>
<div class="t" style="left:49.48px;top:645.00px;font-size:13.04px;color:#666;transform:scaleX(0.9000);">10K</div>
<div class="t" style="left:56.00px;top:696.00px;font-size:13.04px;color:#666;transform:scaleX(0.9000);">0K</div>
<div class="t" style="left:80.03px;top:707.00px;font-size:12.90px;color:#666;transform:scaleX(0.9000);">-100</div>
<div class="t" style="left:193.75px;top:707.00px;font-size:12.90px;color:#666;transform:scaleX(0.9000);">-50</div>
<div class="t" style="left:308.75px;top:707.00px;font-size:12.90px;color:#666;transform:scaleX(0.9000);">0</div>
<div class="t" style="left:210.75px;top:727.00px;font-size:13.04px;color:#666;transform:scaleX(0.9435);">Temperature</div>
<div class="t" style="left:32.98px;top:664.70px;font-size:12.75px;color:#666;transform:rotate(-90deg) scaleX(0.9781)">Number of reads</div>
<div class="t" style="left:618.20px;top:453.00px;font-size:15.51px;color:#666;transform:scaleX(0.8315);">AVERAGE TEMPERATURE AGAINST PREDICTED RANGE FOR SELECTED TIME PERIOD</div>
<div class="t" style="left:707.90px;top:473.00px;font-size:14.93px;color:#ababab;transform:scaleX(0.8940);">Use this visual to view anomalies for specific asset</div>
<svg style="left:0;top:0" width="1350" height="740"><line x1="478.3" y1="519" x2="1314.9" y2="519" stroke="#c8c8c8" stroke-width="1" stroke-dasharray="1 4" fill="none"/><line x1="478.3" y1="588.1" x2="1314.9" y2="588.1" stroke="#c8c8c8" stroke-width="1" stroke-dasharray="1 4" fill="none"/><line x1="478.3" y1="657.2" x2="1314.9" y2="657.2" stroke="#c8c8c8" stroke-width="1" stroke-dasharray="1 4" fill="none"/><line x1="618.3" y1="484.5" x2="618.3" y2="690" stroke="#c8c8c8" stroke-width="1" stroke-dasharray="1 4" fill="none"/><line x1="906.4" y1="484.5" x2="906.4" y2="690" stroke="#c8c8c8" stroke-width="1" stroke-dasharray="1 4" fill="none"/><line x1="1204.3" y1="484.5" x2="1204.3" y2="690" stroke="#c8c8c8" stroke-width="1" stroke-dasharray="1 4" fill="none"/><polygon points="490.0,624.7 490.5,624.7 491.0,624.8 491.5,624.8 492.0,624.8 492.5,624.8 493.0,624.8 493.5,624.8 494.0,624.0 494.5,621.7 495.0,622.1 495.5,623.1 496.0,624.1 496.5,624.9 497.0,624.9 497.5,624.9 498.0,624.9 498.5,624.9 499.0,624.9 499.5,624.9 500.0,624.9 500.5,624.9 501.0,624.9 501.5,624.9 502.0,624.8 502.5,624.8 503.0,624.8 503.5,624.4 504.0,622.1 504.5,621.7 505.0,622.7 505.5,623.6 506.0,624.6 506.5,624.6 507.0,624.5 507.5,624.5 508.0,624.4 508.5,624.4 509.0,624.3 509.5,624.3 510.0,624.2 510.5,624.2 511.0,624.1 511.5,624.1 512.0,624.0 512.5,624.0 513.0,623.9 513.5,621.7 514.0,620.6 514.5,621.5 515.0,622.5 515.5,623.4 516.0,623.6 516.5,623.6 517.0,623.5 517.5,623.5 518.0,623.4 518.5,623.4 519.0,623.3 519.5,623.3 520.0,623.3 520.5,623.2 521.0,623.2 521.5,623.2 522.0,623.1 522.5,623.1 523.0,621.4 523.5,619.6 524.0,620.6 524.5,621.6 525.0,622.6 525.5,623.0 526.0,623.0 526.5,623.0 527.0,623.0 527.5,623.0 528.0,623.0 528.5,623.0 529.0,623.0 529.5,623.1 530.0,623.1 530.5,623.1 531.0,623.1 531.5,623.1 532.0,623.2 532.5,622.0 533.0,619.8 533.5,620.6 534.0,621.6 534.5,622.6 535.0,623.3 535.5,623.3 536.0,623.4 536.5,623.4 537.0,623.4 537.5,623.5 538.0,623.5 538.5,623.5 539.0,623.6 539.5,623.6 540.0,623.6 540.5,623.6 541.0,623.7 541.5,623.7 542.0,623.0 542.5,620.8 543.0,620.8 543.5,621.9 544.0,622.9 544.5,623.8 545.0,623.8 545.5,623.8 546.0,623.8 546.5,623.8 547.0,623.8 547.5,623.8 548.0,623.8 548.5,623.8 549.0,623.8 549.5,623.8 550.0,623.8 550.5,623.8 551.0,623.8 551.5,623.6 552.0,621.3 552.5,620.6 553.0,621.6 553.5,622.6 554.0,623.5 554.5,623.6 555.0,623.6 555.5,623.6 556.0,623.6 556.5,623.6 557.0,623.5 557.5,623.5 558.0,623.5 558.5,623.5 559.0,623.4 559.5,623.4 560.0,623.4 560.5,623.4 561.0,623.4 561.5,621.4 562.0,620.0 562.5,621.0 563.0,622.0 563.5,623.0 564.0,623.3 564.5,623.3 565.0,623.3 565.5,623.3 566.0,623.3 566.5,623.3 567.0,623.3 567.5,623.3 568.0,623.3 568.5,623.3 569.0,623.4 569.5,623.4 570.0,623.4 570.5,623.4 571.0,622.0 571.5,619.9 572.0,621.0 572.5,622.0 573.0,623.0 573.5,623.6 574.0,623.7 574.5,623.7 575.0,623.8 575.5,623.8 576.0,623.9 576.5,623.9 577.0,624.0 577.5,624.0 578.0,624.1 578.5,624.1 579.0,624.2 579.5,624.2 580.0,624.3 580.5,623.4 581.0,621.2 581.5,621.7 582.0,622.7 582.5,623.8 583.0,624.6 583.5,624.7 584.0,624.7 584.5,624.7 585.0,624.8 585.5,624.8 586.0,624.9 586.5,624.9 587.0,625.0 587.5,625.0 588.0,625.0 588.5,625.1 589.0,625.1 589.5,625.1 590.0,624.7 590.5,622.5 591.0,622.2 591.5,623.2 592.0,624.2 592.5,625.2 593.0,625.2 593.5,625.2 594.0,625.2 594.5,625.2 595.0,625.2 595.5,625.2 596.0,625.2 596.5,625.2 597.0,625.2 597.5,625.2 598.0,625.2 598.5,625.2 599.0,625.1 599.5,625.1 600.0,622.9 600.5,621.8 601.0,622.8 601.5,623.8 602.0,624.8 602.5,625.0 603.0,624.9 603.5,624.9 604.0,624.9 604.5,624.9 605.0,624.8 605.5,624.8 606.0,624.8 606.5,624.8 607.0,624.7 607.5,624.7 608.0,624.7 608.5,624.7 609.0,624.7 609.5,622.9 610.0,621.2 610.5,622.2 611.0,623.2 611.5,624.2 612.0,624.6 612.5,624.6 613.0,624.6 613.5,624.6 614.0,624.6 614.5,624.6 615.0,624.6 615.5,624.6 616.0,624.6 616.5,624.6 617.0,624.7 617.5,624.7 618.0,624.7 618.5,624.7 619.0,623.5 619.5,621.3 620.0,622.1 620.5,623.1 621.0,624.2 621.5,624.8 622.0,624.9 622.5,624.9 623.0,624.9 623.5,625.0 624.0,625.0 624.5,625.0 625.0,625.0 625.5,625.1 626.0,625.1 626.5,625.1 627.0,625.1 627.5,625.2 628.0,625.2 628.5,624.5 629.0,622.2 629.5,622.3 630.0,623.4 630.5,624.4 631.0,625.3 631.5,625.3 632.0,625.3 632.5,625.3 633.0,625.3 633.5,625.3 634.0,625.3 634.5,625.3 635.0,625.3 635.5,625.2 636.0,625.2 636.5,625.2 637.0,625.2 637.5,625.2 638.0,624.9 638.5,622.6 639.0,622.0 639.5,622.9 640.0,623.9 640.5,624.9 641.0,624.9 641.5,624.9 642.0,624.8 642.5,624.8 643.0,624.7 643.5,624.7 644.0,624.6 644.5,624.6 645.0,624.5 645.5,624.5 646.0,624.4 646.5,624.4 647.0,624.3 647.5,624.3 648.0,622.2 648.5,620.8 649.0,621.8 649.5,622.7 650.0,623.7 650.5,623.9 651.0,623.9 651.5,623.8 652.0,623.8 652.5,623.8 653.0,623.7 653.5,623.7 654.0,623.6 654.5,623.6 655.0,623.6 655.5,623.5 656.0,623.5 656.5,623.5 657.0,623.4 657.5,621.9 658.0,619.9 658.5,620.8 659.0,621.8 659.5,622.8 660.0,623.4 660.5,623.3 661.0,623.3 661.5,623.3 662.0,623.3 662.5,623.3 663.0,623.3 663.5,623.4 664.0,623.4 664.5,623.4 665.0,623.4 665.5,623.4 666.0,623.4 666.5,623.4 667.0,622.5 667.5,620.2 668.0,620.7 668.5,621.8 669.0,622.8 669.5,623.6 670.0,623.6 670.5,623.6 671.0,623.6 671.5,623.6 672.0,623.7 672.5,623.7 673.0,623.7 673.5,623.7 674.0,623.7 674.5,623.8 675.0,623.8 675.5,623.8 676.0,623.8 676.5,623.3 677.0,621.1 677.5,620.8 678.0,621.9 678.5,622.9 679.0,623.8 679.5,623.8 680.0,623.8 680.5,623.8 681.0,623.8 681.5,623.8 682.0,623.8 682.5,623.8 683.0,623.8 683.5,623.8 684.0,623.7 684.5,623.7 685.0,623.7 685.5,623.7 686.0,623.6 686.5,621.4 687.0,620.4 687.5,621.4 688.0,622.3 688.5,623.3 689.0,623.5 689.5,623.4 690.0,623.4 690.5,623.4 691.0,623.4 691.5,623.3 692.0,623.3 692.5,623.3 693.0,623.2 693.5,623.2 694.0,623.2 694.5,623.1 695.0,623.1 695.5,623.1 696.0,621.3 696.5,619.6 697.0,620.6 697.5,621.6 698.0,622.6 698.5,623.0 699.0,623.0 699.5,623.0 700.0,623.0 700.5,623.0 701.0,623.0 701.5,623.0 702.0,623.0 702.5,623.0 703.0,623.0 703.5,623.0 704.0,623.1 704.5,623.1 705.0,623.1 705.5,621.9 706.0,619.7 706.5,620.6 707.0,621.6 707.5,622.6 708.0,623.3 708.5,623.3 709.0,623.4 709.5,623.4 710.0,623.5 710.5,623.5 711.0,623.6 711.5,623.6 712.0,623.7 712.5,623.7 713.0,623.8 713.5,623.8 714.0,623.9 714.5,623.9 715.0,623.2 715.5,621.0 716.0,621.2 716.5,622.3 717.0,623.3 717.5,624.3 718.0,624.3 718.5,624.4 719.0,624.4 719.5,624.4 720.0,624.5 720.5,624.5 721.0,624.6 721.5,624.6 722.0,624.6 722.5,624.7 723.0,624.7 723.5,624.7 724.0,624.8 724.5,624.5 725.0,622.3 725.5,621.7 726.0,622.7 726.5,623.8 727.0,624.8 727.5,624.9 728.0,624.9 728.5,624.9 729.0,624.9 729.5,624.9 730.0,624.9 730.5,624.9 731.0,624.9 731.5,624.8 732.0,624.8 732.5,624.8 733.0,624.8 733.5,624.8 734.0,624.8 734.5,622.7 735.0,621.4 736.3,624.3 737.3,624.6 738.2,624.9 739.2,625.3 740.2,625.6 741.2,625.9 742.2,626.2 743.1,626.5 744.1,626.8 745.1,627.1 746.1,627.4 747.1,627.8 748.0,628.1 749.0,628.4 750.0,625.3 750.5,625.4 751.0,625.4 751.5,625.4 752.0,625.5 752.5,625.5 753.0,625.5 753.5,624.5 754.0,622.3 754.5,622.9 755.0,623.9 755.5,625.0 756.0,625.7 756.5,625.8 757.0,625.8 757.5,625.8 758.0,625.8 758.5,625.8 759.0,625.8 759.5,625.9 760.0,625.9 760.5,625.9 761.0,625.9 761.5,625.9 762.0,625.9 762.5,625.8 763.0,625.3 763.5,623.0 764.0,622.8 764.5,623.8 765.0,624.8 765.5,625.7 766.0,625.7 766.5,625.6 767.0,625.6 767.5,625.6 768.0,625.5 768.5,625.5 769.0,625.4 769.5,625.4 770.0,625.3 770.5,625.3 771.0,625.2 771.5,625.2 772.0,625.1 772.5,625.0 773.0,622.7 773.5,621.8 774.0,622.8 774.5,623.7 775.0,624.7 775.5,624.8 776.0,624.7 776.5,624.7 777.0,624.7 777.5,624.6 778.0,624.6 778.5,624.5 779.0,624.5 779.5,624.5 780.0,624.5 780.5,624.4 781.0,624.4 781.5,624.4 782.0,624.4 782.5,622.6 783.0,621.0 783.5,621.9 784.0,622.9 784.5,623.9 785.0,624.3 785.5,624.4 786.0,624.4 786.5,624.4 787.0,624.4 787.5,624.4 788.0,624.4 788.5,624.4 789.0,624.5 789.5,624.5 790.0,624.5 790.5,624.5 791.0,624.5 791.5,624.6 792.0,623.3 792.5,621.1 793.0,622.0 793.5,623.0 794.0,624.1 794.5,624.7 795.0,624.7 795.5,624.7 796.0,624.8 796.5,624.8 797.0,624.8 797.5,624.8 798.0,624.8 798.5,624.8 799.0,624.8 799.5,624.8 800.0,624.8 800.5,624.8 801.0,624.8 801.5,624.0 802.0,621.7 802.5,621.9 803.0,622.9 803.5,623.9 804.0,624.7 804.5,624.6 805.0,624.6 805.5,624.6 806.0,624.5 806.5,624.5 807.0,624.5 807.5,624.4 808.0,624.4 808.5,624.3 809.0,624.3 809.5,624.2 810.0,624.2 810.5,624.1 811.0,623.7 811.5,621.4 812.0,620.9 812.5,621.9 813.0,622.8 813.5,623.8 814.0,623.8 814.5,623.7 815.0,623.7 815.5,623.6 816.0,623.6 816.5,623.5 817.0,623.5 817.5,623.5 818.0,623.4 818.5,623.4 819.0,623.4 819.5,623.4 820.0,623.4 820.5,623.3 821.0,621.3 821.5,620.0 822.0,621.0 822.5,622.0 823.0,623.0 823.5,623.3 824.0,623.3 824.5,623.3 825.0,623.4 825.5,623.4 826.0,623.4 826.5,623.4 827.0,623.4 827.5,623.5 828.0,623.5 828.5,623.5 829.0,623.6 829.5,623.6 830.0,623.6 830.5,622.1 831.0,620.2 831.5,621.2 832.0,622.3 832.5,623.3 833.0,623.8 833.5,623.9 834.0,623.9 834.5,623.9 835.0,624.0 835.5,624.0 836.0,624.0 836.5,624.1 837.0,624.1 837.5,624.1 838.0,624.1 838.5,624.2 839.0,624.2 839.5,624.2 840.0,623.1 840.5,620.9 841.0,621.5 841.5,622.5 842.0,623.5 842.5,624.2 843.0,624.2 843.5,624.2 844.0,624.2 844.5,624.2 845.0,624.1 845.5,624.1 846.0,624.1 846.5,624.1 847.0,624.1 847.5,624.0 848.0,624.0 848.5,624.0 849.0,623.9 849.5,623.3 850.0,621.0 850.5,620.9 851.0,621.9 851.5,622.8 852.0,623.8 852.5,623.7 853.0,623.7 853.5,623.7 854.0,623.6 854.5,623.6 855.0,623.6 855.5,623.6 856.0,623.5 856.5,623.5 857.0,623.5 857.5,623.5 858.0,623.5 858.5,623.5 859.0,623.4 859.5,621.1 860.0,620.3 860.5,621.3 861.0,622.3 861.5,623.4 862.0,623.5 862.5,623.6 863.0,623.6 863.5,623.6 864.0,623.6 864.5,623.7 865.0,623.7 865.5,623.7 866.0,623.8 866.5,623.8 867.0,623.9 867.5,623.9 868.0,624.0 868.5,624.0 869.0,622.2 869.5,620.7 870.0,621.8 870.5,622.8 871.0,623.9 871.5,624.3 872.0,624.4 872.5,624.4 873.0,624.5 873.5,624.5 874.0,624.6 874.5,624.6 875.0,624.7 875.5,624.7 876.0,624.8 876.5,624.8 877.0,624.9 877.5,624.9 878.0,624.9 878.5,623.6 879.0,621.4 879.5,622.4 880.0,623.4 880.5,624.5 881.0,625.1 881.5,625.1 882.0,625.1 882.5,625.1 883.0,625.1 883.5,625.1 884.0,625.1 884.5,625.1 885.0,625.1 885.5,625.1 886.0,625.1 886.5,625.0 887.0,625.0 887.5,625.0 888.0,624.1 888.5,621.9 889.0,622.1 889.5,623.1 890.0,624.1 890.5,624.9 891.0,624.8 891.5,624.8 892.0,624.8 892.5,624.8 893.0,624.7 893.5,624.7 894.0,624.7 894.5,624.7 895.0,624.7 895.5,624.7 896.0,624.6 896.5,624.6 897.0,624.6 897.5,624.3 898.0,622.0 898.5,621.6 899.0,622.6 899.5,623.6 900.0,624.6 900.5,624.6 901.0,624.6 901.5,624.7 902.0,624.7 902.5,624.7 903.0,624.7 903.5,624.8 904.0,624.8 904.5,624.8 905.0,624.9 905.5,624.9 906.0,624.9 906.5,625.0 907.0,625.0 907.5,623.0 908.0,621.9 908.5,622.9 909.0,623.9 909.5,625.0 910.0,625.3 910.5,625.4 911.0,625.4 911.5,625.4 912.0,625.5 912.5,625.5 913.0,625.6 913.5,625.6 914.0,625.7 914.5,625.7 915.0,625.7 915.5,625.8 916.0,625.8 916.5,625.8 917.0,624.3 917.5,622.4 918.0,623.4 918.5,624.5 919.0,625.5 919.5,626.0 920.0,626.0 920.5,626.0 921.0,626.0 921.5,626.0 922.0,626.0 922.5,626.0 923.0,625.9 923.5,625.9 924.0,625.9 924.5,625.9 925.0,625.9 925.5,625.8 926.0,625.8 926.5,624.7 927.0,622.4 927.5,623.0 928.0,624.0 928.5,624.9 929.0,625.6 929.5,625.6 930.0,625.5 930.5,625.5 931.0,625.4 931.5,625.4 932.0,625.4 932.5,625.3 933.0,625.3 933.5,625.2 934.0,625.2 934.5,625.2 935.0,625.1 935.5,625.1 936.0,624.4 936.5,622.2 937.0,622.1 937.5,623.1 938.0,624.1 938.5,625.0 939.0,624.9 939.5,624.9 940.0,624.9 940.5,624.9 941.0,624.9 941.5,624.9 942.0,624.9 942.5,624.9 943.0,624.9 943.5,624.9 944.0,625.0 944.5,625.0 945.0,625.0 945.5,624.9 946.0,622.6 946.5,621.9 947.0,622.9 947.5,624.0 948.0,625.0 948.5,625.2 949.0,625.2 949.5,625.2 950.0,625.2 950.5,625.3 951.0,625.3 951.5,625.3 952.0,625.4 952.5,625.4 953.0,625.4 953.5,625.4 954.0,625.4 954.5,625.5 955.0,625.5 955.5,623.6 956.0,622.1 956.5,623.2 957.0,624.2 957.5,625.2 958.0,625.5 958.5,625.5 959.0,625.5 959.5,625.5 960.0,625.5 960.5,625.5 961.0,625.5 961.5,625.4 962.0,625.4 962.5,625.4 963.0,625.4 963.5,625.3 964.0,625.3 964.5,625.2 965.0,623.8 965.5,621.6 966.0,622.5 966.5,623.5 967.0,624.4 967.5,625.0 968.0,624.9 968.5,624.8 969.0,624.8 969.5,624.7 970.0,624.7 970.5,624.6 971.0,624.6 971.5,624.5 972.0,624.5 972.5,624.4 973.0,624.4 973.5,624.3 974.0,624.3 974.5,623.3 975.0,621.0 975.5,621.3 976.0,622.3 976.5,623.3 977.0,624.0 977.5,624.0 978.0,624.0 978.5,623.9 979.0,623.9 979.5,623.9 980.0,623.9 980.5,623.9 981.0,623.9 981.5,623.9 982.0,623.9 982.5,623.9 983.0,623.9 983.5,623.9 984.0,623.5 984.5,621.2 985.0,620.9 985.5,621.9 986.0,622.9 986.5,623.9 987.0,624.0 987.5,624.0 988.0,624.0 988.5,624.1 989.0,624.1 989.5,624.1 990.0,624.1 990.5,624.2 991.0,624.2 991.5,624.2 992.0,624.2 992.5,624.3 993.0,624.3 993.5,624.3 994.0,622.2 994.5,621.1 995.0,622.1 995.5,623.1 996.0,624.1 996.5,624.4 997.0,624.4 997.5,624.4 998.0,624.4 998.5,624.4 999.0,624.4 999.5,624.4 1000.0,624.4 1000.5,624.4 1001.0,624.3 1001.5,624.3 1002.0,624.3 1002.5,624.3 1003.0,624.3 1003.5,622.6 1004.0,620.7 1004.5,621.7 1005.0,622.7 1005.5,623.6 1006.0,624.0 1006.5,624.0 1007.0,624.0 1007.5,623.9 1008.0,623.9 1008.5,623.8 1009.0,623.8 1009.5,623.7 1010.0,623.7 1010.5,623.6 1011.0,623.6 1011.5,623.6 1012.0,623.5 1012.5,623.5 1013.0,622.3 1013.5,620.0 1014.0,620.7 1014.5,621.7 1015.0,622.6 1015.5,623.3 1016.0,623.3 1016.5,623.3 1017.0,623.2 1017.5,623.2 1018.0,623.2 1018.5,623.2 1019.0,623.2 1020.3,624.9 1021.2,625.1 1022.2,625.3 1023.1,625.5 1024.1,625.6 1025.0,625.8 1026.0,626.0 1026.9,626.2 1027.9,626.4 1028.9,626.6 1029.8,626.8 1030.8,627.0 1031.7,627.2 1032.7,627.4 1033.6,627.5 1034.6,627.7 1035.5,627.9 1036.5,628.1 1037.4,628.3 1038.4,628.5 1039.4,628.7 1040.3,628.9 1041.3,629.1 1042.2,629.3 1043.2,629.4 1044.1,629.6 1045.1,629.8 1046.0,630.0 1047.5,627.4 1048.0,627.4 1048.5,627.4 1049.0,627.3 1049.5,627.3 1050.0,627.2 1050.5,627.2 1051.0,627.1 1051.5,625.7 1052.0,623.4 1052.5,624.4 1053.0,625.3 1053.5,626.3 1054.0,626.8 1054.5,626.8 1055.0,626.8 1055.5,626.7 1056.0,626.7 1056.5,626.6 1057.0,626.6 1057.5,626.6 1058.0,626.6 1058.5,626.5 1059.0,626.5 1059.5,626.5 1060.0,626.5 1060.5,626.5 1061.0,625.6 1061.5,623.4 1062.0,623.7 1062.5,624.7 1063.0,625.8 1063.5,626.6 1064.0,626.6 1064.5,626.7 1065.0,626.7 1065.5,626.7 1066.0,626.8 1066.5,626.8 1067.0,626.9 1067.5,626.9 1068.0,627.0 1068.5,627.0 1069.0,627.1 1069.5,627.1 1070.0,627.2 1070.5,626.8 1071.0,624.6 1071.5,624.3 1072.0,625.3 1072.5,626.4 1073.0,627.4 1073.5,627.4 1074.0,627.5 1074.5,627.5 1075.0,627.5 1075.5,627.5 1076.0,627.5 1076.5,627.5 1077.0,627.5 1077.5,627.5 1078.0,627.5 1078.5,627.4 1079.0,627.4 1079.5,627.4 1080.0,627.3 1080.5,625.5 1081.0,623.9 1081.5,624.8 1082.0,625.8 1082.5,626.7 1083.0,627.1 1083.5,627.0 1084.0,627.0 1084.5,626.9 1085.0,626.9 1085.5,626.8 1086.0,626.8 1086.5,626.7 1087.0,626.7 1087.5,626.7 1088.0,626.6 1088.5,626.6 1089.0,626.6 1089.5,626.5 1090.0,625.2 1090.5,622.9 1091.0,623.9 1091.5,624.9 1092.0,625.9 1092.5,626.5 1093.0,626.5 1093.5,626.5 1094.9,627.4 1095.8,627.7 1096.8,628.1 1097.8,628.5 1098.7,628.8 1099.7,629.2 1100.6,629.5 1101.6,629.9 1102.6,630.3 1103.5,630.6 1104.5,631.0 1105.0,627.5 1105.5,627.5 1106.0,627.5 1106.5,627.5 1107.0,627.5 1107.5,627.5 1108.0,627.5 1108.5,627.5 1109.0,627.5 1109.5,625.2 1110.0,624.3 1110.5,625.3 1111.0,626.3 1111.5,627.3 1112.0,627.5 1112.5,627.5 1113.0,627.5 1113.5,627.5 1114.0,627.5 1114.5,627.5 1115.0,627.5 1115.5,627.5 1116.0,625.7 1156.2,518.2 1287.0,615.7 1288.0,617.5 1290.0,616.0 1292.0,616.5 1294.5,612.5 1296.0,616.0 1299.0,616.5 1301.0,615.5 1303.5,612.3 1305.0,615.8 1307.0,614.5 1307.0,663.0 1307.0,663.0 1305.0,662.0 1303.5,659.0 1301.0,662.5 1298.0,663.0 1296.0,660.0 1294.0,663.5 1291.0,664.0 1289.0,664.9 1287.0,675.7 1156.2,518.2 1117.5,655.0 1115.5,655.0 1115.0,655.0 1114.5,655.0 1114.0,655.0 1113.5,655.0 1113.0,655.0 1112.5,655.0 1112.0,655.0 1111.5,654.8 1111.0,653.8 1110.5,652.8 1110.0,651.8 1109.5,652.8 1109.0,655.0 1108.5,655.0 1108.0,655.0 1107.5,655.0 1107.0,655.0 1106.5,655.0 1106.0,655.0 1105.5,655.0 1105.0,655.0 1104.5,655.0 1103.5,655.0 1102.6,655.0 1101.6,655.0 1100.6,655.0 1099.7,655.0 1098.7,655.0 1097.8,655.0 1096.8,655.0 1095.8,655.0 1094.9,655.0 1093.5,654.5 1093.0,654.5 1092.5,654.5 1092.0,653.9 1091.5,652.9 1091.0,651.9 1090.5,650.9 1090.0,653.2 1089.5,654.5 1089.0,654.6 1088.5,654.6 1088.0,654.6 1087.5,654.7 1087.0,654.7 1086.5,654.7 1086.0,654.8 1085.5,654.8 1085.0,654.9 1084.5,654.9 1084.0,655.0 1083.5,655.0 1083.0,655.1 1082.5,654.7 1082.0,653.8 1081.5,652.8 1081.0,651.9 1080.5,653.5 1080.0,655.3 1079.5,655.4 1079.0,655.4 1078.5,655.4 1078.0,655.5 1077.5,655.5 1077.0,655.5 1076.5,655.5 1076.0,655.5 1075.5,655.5 1075.0,655.5 1074.5,655.5 1074.0,655.5 1073.5,655.4 1073.0,655.4 1072.5,654.4 1072.0,653.3 1071.5,652.3 1071.0,652.6 1070.5,654.8 1070.0,655.2 1069.5,655.1 1069.0,655.1 1068.5,655.0 1068.0,655.0 1067.5,654.9 1067.0,654.9 1066.5,654.8 1066.0,654.8 1065.5,654.7 1065.0,654.7 1064.5,654.7 1064.0,654.6 1063.5,654.6 1063.0,653.8 1062.5,652.7 1062.0,651.7 1061.5,651.4 1061.0,653.6 1060.5,654.5 1060.0,654.5 1059.5,654.5 1059.0,654.5 1058.5,654.5 1058.0,654.6 1057.5,654.6 1057.0,654.6 1056.5,654.6 1056.0,654.7 1055.5,654.7 1055.0,654.8 1054.5,654.8 1054.0,654.8 1053.5,654.3 1053.0,653.3 1052.5,652.4 1052.0,651.4 1051.5,653.7 1051.0,655.1 1050.5,655.2 1050.0,655.2 1049.5,655.3 1049.0,655.3 1048.5,655.4 1048.0,655.4 1047.5,655.4 1046.0,653.1 1045.1,653.0 1044.1,653.0 1043.2,653.0 1042.2,652.9 1041.3,652.9 1040.3,652.9 1039.4,652.9 1038.4,652.8 1037.4,652.8 1036.5,652.8 1035.5,652.7 1034.6,652.7 1033.6,652.7 1032.7,652.6 1031.7,652.6 1030.8,652.6 1029.8,652.5 1028.9,652.5 1027.9,652.5 1026.9,652.4 1026.0,652.4 1025.0,652.4 1024.1,652.4 1023.1,652.3 1022.2,652.3 1021.2,652.3 1020.3,652.2 1019.0,655.4 1018.5,655.4 1018.0,655.4 1017.5,655.4 1017.0,655.4 1016.5,655.5 1016.0,655.5 1015.5,655.5 1015.0,654.8 1014.5,653.9 1014.0,652.9 1013.5,652.2 1013.0,654.5 1012.5,655.7 1012.0,655.7 1011.5,655.8 1011.0,655.8 1010.5,655.8 1010.0,655.9 1009.5,655.9 1009.0,656.0 1008.5,656.0 1008.0,656.1 1007.5,656.1 1007.0,656.2 1006.5,656.2 1006.0,656.2 1005.5,655.8 1005.0,654.9 1004.5,653.9 1004.0,652.9 1003.5,654.8 1003.0,656.5 1002.5,656.5 1002.0,656.5 1001.5,656.5 1001.0,656.5 1000.5,656.6 1000.0,656.6 999.5,656.6 999.0,656.6 998.5,656.6 998.0,656.6 997.5,656.6 997.0,656.6 996.5,656.6 996.0,656.3 995.5,655.3 995.0,654.3 994.5,653.3 994.0,654.4 993.5,656.5 993.0,656.5 992.5,656.5 992.0,656.4 991.5,656.4 991.0,656.4 990.5,656.4 990.0,656.3 989.5,656.3 989.0,656.3 988.5,656.3 988.0,656.2 987.5,656.2 987.0,656.2 986.5,656.1 986.0,655.1 985.5,654.1 985.0,653.1 984.5,653.4 984.0,655.7 983.5,656.1 983.0,656.1 982.5,656.1 982.0,656.1 981.5,656.1 981.0,656.1 980.5,656.1 980.0,656.1 979.5,656.1 979.0,656.1 978.5,656.1 978.0,656.2 977.5,656.2 977.0,656.2 976.5,655.5 976.0,654.5 975.5,653.5 975.0,653.2 974.5,655.5 974.0,656.5 973.5,656.5 973.0,656.6 972.5,656.6 972.0,656.7 971.5,656.7 971.0,656.8 970.5,656.8 970.0,656.9 969.5,656.9 969.0,657.0 968.5,657.0 968.0,657.1 967.5,657.2 967.0,656.6 966.5,655.7 966.0,654.7 965.5,653.8 965.0,656.0 964.5,657.4 964.0,657.5 963.5,657.5 963.0,657.6 962.5,657.6 962.0,657.6 961.5,657.6 961.0,657.7 960.5,657.7 960.0,657.7 959.5,657.7 959.0,657.7 958.5,657.7 958.0,657.7 957.5,657.4 957.0,656.4 956.5,655.4 956.0,654.3 955.5,655.8 955.0,657.7 954.5,657.7 954.0,657.6 953.5,657.6 953.0,657.6 952.5,657.6 952.0,657.6 951.5,657.5 951.0,657.5 950.5,657.5 950.0,657.4 949.5,657.4 949.0,657.4 948.5,657.4 948.0,657.2 947.5,656.2 947.0,655.1 946.5,654.1 946.0,654.8 945.5,657.1 945.0,657.2 944.5,657.2 944.0,657.2 943.5,657.1 943.0,657.1 942.5,657.1 942.0,657.1 941.5,657.1 941.0,657.1 940.5,657.1 940.0,657.1 939.5,657.1 939.0,657.1 938.5,657.2 938.0,656.3 937.5,655.3 937.0,654.3 936.5,654.4 936.0,656.6 935.5,657.3 935.0,657.3 934.5,657.4 934.0,657.4 933.5,657.4 933.0,657.5 932.5,657.5 932.0,657.6 931.5,657.6 931.0,657.6 930.5,657.7 930.0,657.7 929.5,657.8 929.0,657.8 928.5,657.1 928.0,656.2 927.5,655.2 927.0,654.6 926.5,656.9 926.0,658.0 925.5,658.0 925.0,658.1 924.5,658.1 924.0,658.1 923.5,658.1 923.0,658.1 922.5,658.2 922.0,658.2 921.5,658.2 921.0,658.2 920.5,658.2 920.0,658.2 919.5,658.2 919.0,657.7 918.5,656.7 918.0,655.6 917.5,654.6 917.0,656.5 916.5,658.0 916.0,658.0 915.5,658.0 915.0,657.9 914.5,657.9 914.0,657.9 913.5,657.8 913.0,657.8 912.5,657.7 912.0,657.7 911.5,657.6 911.0,657.6 910.5,657.6 910.0,657.5 909.5,657.2 909.0,656.1 908.5,655.1 908.0,654.1 907.5,655.2 907.0,657.2 906.5,657.2 906.0,657.1 905.5,657.1 905.0,657.1 904.5,657.0 904.0,657.0 903.5,657.0 903.0,656.9 902.5,656.9 902.0,656.9 901.5,656.9 901.0,656.8 900.5,656.8 900.0,656.8 899.5,655.8 899.0,654.8 898.5,653.8 898.0,654.2 897.5,656.5 897.0,656.8 896.5,656.8 896.0,656.8 895.5,656.9 895.0,656.9 894.5,656.9 894.0,656.9 893.5,656.9 893.0,656.9 892.5,657.0 892.0,657.0 891.5,657.0 891.0,657.0 890.5,657.1 890.0,656.3 889.5,655.3 889.0,654.3 888.5,654.1 888.0,656.3 887.5,657.2 887.0,657.2 886.5,657.2 886.0,657.3 885.5,657.3 885.0,657.3 884.5,657.3 884.0,657.3 883.5,657.3 883.0,657.3 882.5,657.3 882.0,657.3 881.5,657.3 881.0,657.3 880.5,656.7 880.0,655.6 879.5,654.6 879.0,653.6 878.5,655.8 878.0,657.1 877.5,657.1 877.0,657.1 876.5,657.0 876.0,657.0 875.5,656.9 875.0,656.9 874.5,656.8 874.0,656.8 873.5,656.7 873.0,656.7 872.5,656.6 872.0,656.6 871.5,656.5 871.0,656.1 870.5,655.0 870.0,654.0 869.5,652.9 869.0,654.4 868.5,656.2 868.0,656.2 867.5,656.1 867.0,656.1 866.5,656.0 866.0,656.0 865.5,655.9 865.0,655.9 864.5,655.9 864.0,655.8 863.5,655.8 863.0,655.8 862.5,655.8 862.0,655.7 861.5,655.6 861.0,654.5 860.5,653.5 860.0,652.5 859.5,653.3 859.0,655.6 858.5,655.7 858.0,655.7 857.5,655.7 857.0,655.7 856.5,655.7 856.0,655.7 855.5,655.8 855.0,655.8 854.5,655.8 854.0,655.8 853.5,655.9 853.0,655.9 852.5,655.9 852.0,656.0 851.5,655.0 851.0,654.1 850.5,653.1 850.0,653.2 849.5,655.5 849.0,656.1 848.5,656.2 848.0,656.2 847.5,656.2 847.0,656.3 846.5,656.3 846.0,656.3 845.5,656.3 845.0,656.3 844.5,656.4 844.0,656.4 843.5,656.4 843.0,656.4 842.5,656.4 842.0,655.7 841.5,654.7 841.0,653.7 840.5,653.1 840.0,655.3 839.5,656.4 839.0,656.4 838.5,656.4 838.0,656.3 837.5,656.3 837.0,656.3 836.5,656.3 836.0,656.2 835.5,656.2 835.0,656.2 834.5,656.1 834.0,656.1 833.5,656.1 833.0,656.0 832.5,655.5 832.0,654.5 831.5,653.4 831.0,652.4 830.5,654.3 830.0,655.8 829.5,655.8 829.0,655.8 828.5,655.7 828.0,655.7 827.5,655.7 827.0,655.6 826.5,655.6 826.0,655.6 825.5,655.6 825.0,655.6 824.5,655.5 824.0,655.5 823.5,655.5 823.0,655.2 822.5,654.2 822.0,653.2 821.5,652.2 821.0,653.5 820.5,655.5 820.0,655.6 819.5,655.6 819.0,655.6 818.5,655.6 818.0,655.6 817.5,655.7 817.0,655.7 816.5,655.7 816.0,655.8 815.5,655.8 815.0,655.9 814.5,655.9 814.0,656.0 813.5,656.0 813.0,655.0 812.5,654.1 812.0,653.1 811.5,653.6 811.0,655.9 810.5,656.3 810.0,656.4 809.5,656.4 809.0,656.5 808.5,656.5 808.0,656.6 807.5,656.6 807.0,656.7 806.5,656.7 806.0,656.7 805.5,656.8 805.0,656.8 804.5,656.8 804.0,656.9 803.5,656.1 803.0,655.1 802.5,654.1 802.0,653.9 801.5,656.2 801.0,657.0 800.5,657.0 800.0,657.0 799.5,657.0 799.0,657.0 798.5,657.0 798.0,657.0 797.5,657.0 797.0,657.0 796.5,657.0 796.0,657.0 795.5,656.9 795.0,656.9 794.5,656.9 794.0,656.3 793.5,655.2 793.0,654.2 792.5,653.3 792.0,655.5 791.5,656.8 791.0,656.7 790.5,656.7 790.0,656.7 789.5,656.7 789.0,656.7 788.5,656.6 788.0,656.6 787.5,656.6 787.0,656.6 786.5,656.6 786.0,656.6 785.5,656.6 785.0,656.5 784.5,656.1 784.0,655.1 783.5,654.1 783.0,653.2 782.5,654.8 782.0,656.6 781.5,656.6 781.0,656.6 780.5,656.6 780.0,656.7 779.5,656.7 779.0,656.7 778.5,656.7 778.0,656.8 777.5,656.8 777.0,656.9 776.5,656.9 776.0,656.9 775.5,657.0 775.0,656.9 774.5,655.9 774.0,655.0 773.5,654.0 773.0,654.9 772.5,657.2 772.0,657.3 771.5,657.4 771.0,657.4 770.5,657.5 770.0,657.5 769.5,657.6 769.0,657.6 768.5,657.7 768.0,657.7 767.5,657.8 767.0,657.8 766.5,657.8 766.0,657.9 765.5,657.9 765.0,657.0 764.5,656.0 764.0,655.0 763.5,655.2 763.0,657.5 762.5,658.0 762.0,658.1 761.5,658.1 761.0,658.1 760.5,658.1 760.0,658.1 759.5,658.1 759.0,658.0 758.5,658.0 758.0,658.0 757.5,658.0 757.0,658.0 756.5,658.0 756.0,657.9 755.5,657.2 755.0,656.1 754.5,655.1 754.0,654.5 753.5,656.7 753.0,657.7 752.5,657.7 752.0,657.7 751.5,657.6 751.0,657.6 750.5,657.6 750.0,657.5 749.0,655.0 748.0,655.0 747.1,655.0 746.1,655.0 745.1,655.0 744.1,655.0 743.1,655.0 742.2,655.0 741.2,655.0 740.2,655.0 739.2,655.0 738.2,655.0 737.3,655.0 736.3,655.0 735.0,653.6 734.5,654.9 734.0,657.0 733.5,657.0 733.0,657.0 732.5,657.0 732.0,657.0 731.5,657.0 731.0,657.1 730.5,657.1 730.0,657.1 729.5,657.1 729.0,657.1 728.5,657.1 728.0,657.1 727.5,657.1 727.0,657.0 726.5,656.0 726.0,654.9 725.5,653.9 725.0,654.5 724.5,656.7 724.0,657.0 723.5,656.9 723.0,656.9 722.5,656.9 722.0,656.8 721.5,656.8 721.0,656.8 720.5,656.7 720.0,656.7 719.5,656.6 719.0,656.6 718.5,656.6 718.0,656.5 717.5,656.5 717.0,655.5 716.5,654.5 716.0,653.4 715.5,653.2 715.0,655.4 714.5,656.1 714.0,656.1 713.5,656.0 713.0,656.0 712.5,655.9 712.0,655.9 711.5,655.8 711.0,655.8 710.5,655.7 710.0,655.7 709.5,655.6 709.0,655.6 708.5,655.5 708.0,655.5 707.5,654.8 707.0,653.8 706.5,652.8 706.0,651.9 705.5,654.1 705.0,655.3 704.5,655.3 704.0,655.3 703.5,655.2 703.0,655.2 702.5,655.2 702.0,655.2 701.5,655.2 701.0,655.2 700.5,655.2 700.0,655.2 699.5,655.2 699.0,655.2 698.5,655.2 698.0,654.8 697.5,653.8 697.0,652.8 696.5,651.8 696.0,653.5 695.5,655.3 695.0,655.3 694.5,655.3 694.0,655.4 693.5,655.4 693.0,655.4 692.5,655.5 692.0,655.5 691.5,655.5 691.0,655.6 690.5,655.6 690.0,655.6 689.5,655.6 689.0,655.7 688.5,655.5 688.0,654.5 687.5,653.6 687.0,652.6 686.5,653.6 686.0,655.8 685.5,655.9 685.0,655.9 684.5,655.9 684.0,655.9 683.5,656.0 683.0,656.0 682.5,656.0 682.0,656.0 681.5,656.0 681.0,656.0 680.5,656.0 680.0,656.0 679.5,656.0 679.0,656.0 678.5,655.1 678.0,654.1 677.5,653.0 677.0,653.3 676.5,655.5 676.0,656.0 675.5,656.0 675.0,656.0 674.5,656.0 674.0,655.9 673.5,655.9 673.0,655.9 672.5,655.9 672.0,655.9 671.5,655.8 671.0,655.8 670.5,655.8 670.0,655.8 669.5,655.8 669.0,655.0 668.5,654.0 668.0,652.9 667.5,652.4 667.0,654.7 666.5,655.6 666.0,655.6 665.5,655.6 665.0,655.6 664.5,655.6 664.0,655.6 663.5,655.6 663.0,655.5 662.5,655.5 662.0,655.5 661.5,655.5 661.0,655.5 660.5,655.5 660.0,655.6 659.5,655.0 659.0,654.0 658.5,653.0 658.0,652.1 657.5,654.1 657.0,655.6 656.5,655.7 656.0,655.7 655.5,655.7 655.0,655.8 654.5,655.8 654.0,655.8 653.5,655.9 653.0,655.9 652.5,656.0 652.0,656.0 651.5,656.0 651.0,656.1 650.5,656.1 650.0,655.9 649.5,654.9 649.0,654.0 648.5,653.0 648.0,654.4 647.5,656.5 647.0,656.5 646.5,656.6 646.0,656.6 645.5,656.7 645.0,656.7 644.5,656.8 644.0,656.8 643.5,656.9 643.0,656.9 642.5,657.0 642.0,657.0 641.5,657.1 641.0,657.1 640.5,657.1 640.0,656.1 639.5,655.1 639.0,654.2 638.5,654.8 638.0,657.1 637.5,657.4 637.0,657.4 636.5,657.4 636.0,657.4 635.5,657.4 635.0,657.5 634.5,657.5 634.0,657.5 633.5,657.5 633.0,657.5 632.5,657.5 632.0,657.5 631.5,657.5 631.0,657.5 630.5,656.6 630.0,655.6 629.5,654.5 629.0,654.4 628.5,656.7 628.0,657.4 627.5,657.4 627.0,657.3 626.5,657.3 626.0,657.3 625.5,657.3 625.0,657.2 624.5,657.2 624.0,657.2 623.5,657.2 623.0,657.1 622.5,657.1 622.0,657.1 621.5,657.0 621.0,656.4 620.5,655.3 620.0,654.3 619.5,653.5 619.0,655.7 618.5,656.9 618.0,656.9 617.5,656.9 617.0,656.9 616.5,656.8 616.0,656.8 615.5,656.8 615.0,656.8 614.5,656.8 614.0,656.8 613.5,656.8 613.0,656.8 612.5,656.8 612.0,656.8 611.5,656.4 611.0,655.4 610.5,654.4 610.0,653.4 609.5,655.1 609.0,656.9 608.5,656.9 608.0,656.9 607.5,656.9 607.0,656.9 606.5,657.0 606.0,657.0 605.5,657.0 605.0,657.0 604.5,657.1 604.0,657.1 603.5,657.1 603.0,657.1 602.5,657.2 602.0,657.0 601.5,656.0 601.0,655.0 600.5,654.0 600.0,655.1 599.5,657.3 599.0,657.3 598.5,657.4 598.0,657.4 597.5,657.4 597.0,657.4 596.5,657.4 596.0,657.4 595.5,657.4 595.0,657.4 594.5,657.4 594.0,657.4 593.5,657.4 593.0,657.4 592.5,657.4 592.0,656.4 591.5,655.4 591.0,654.4 590.5,654.7 590.0,656.9 589.5,657.3 589.0,657.3 588.5,657.3 588.0,657.2 587.5,657.2 587.0,657.2 586.5,657.1 586.0,657.1 585.5,657.0 585.0,657.0 584.5,656.9 584.0,656.9 583.5,656.9 583.0,656.8 582.5,656.0 582.0,654.9 581.5,653.9 581.0,653.4 580.5,655.6 580.0,656.5 579.5,656.4 579.0,656.4 578.5,656.3 578.0,656.3 577.5,656.2 577.0,656.2 576.5,656.1 576.0,656.1 575.5,656.0 575.0,656.0 574.5,655.9 574.0,655.9 573.5,655.8 573.0,655.2 572.5,654.2 572.0,653.2 571.5,652.1 571.0,654.2 570.5,655.6 570.0,655.6 569.5,655.6 569.0,655.6 568.5,655.5 568.0,655.5 567.5,655.5 567.0,655.5 566.5,655.5 566.0,655.5 565.5,655.5 565.0,655.5 564.5,655.5 564.0,655.5 563.5,655.2 563.0,654.2 562.5,653.2 562.0,652.2 561.5,653.6 561.0,655.6 560.5,655.6 560.0,655.6 559.5,655.6 559.0,655.6 558.5,655.7 558.0,655.7 557.5,655.7 557.0,655.7 556.5,655.8 556.0,655.8 555.5,655.8 555.0,655.8 554.5,655.8 554.0,655.7 553.5,654.8 553.0,653.8 552.5,652.8 552.0,653.5 551.5,655.8 551.0,656.0 550.5,656.0 550.0,656.0 549.5,656.0 549.0,656.0 548.5,656.0 548.0,656.0 547.5,656.0 547.0,656.0 546.5,656.0 546.0,656.0 545.5,656.0 545.0,656.0 544.5,656.0 544.0,655.1 543.5,654.1 543.0,653.0 542.5,653.0 542.0,655.2 541.5,655.9 541.0,655.9 540.5,655.8 540.0,655.8 539.5,655.8 539.0,655.8 538.5,655.7 538.0,655.7 537.5,655.7 537.0,655.6 536.5,655.6 536.0,655.6 535.5,655.5 535.0,655.5 534.5,654.8 534.0,653.8 533.5,652.8 533.0,652.0 532.5,654.2 532.0,655.4 531.5,655.3 531.0,655.3 530.5,655.3 530.0,655.3 529.5,655.3 529.0,655.2 528.5,655.2 528.0,655.2 527.5,655.2 527.0,655.2 526.5,655.2 526.0,655.2 525.5,655.2 525.0,654.8 524.5,653.8 524.0,652.8 523.5,651.8 523.0,653.6 522.5,655.3 522.0,655.3 521.5,655.4 521.0,655.4 520.5,655.4 520.0,655.5 519.5,655.5 519.0,655.5 518.5,655.6 518.0,655.6 517.5,655.7 517.0,655.7 516.5,655.8 516.0,655.8 515.5,655.6 515.0,654.7 514.5,653.7 514.0,652.8 513.5,653.9 513.0,656.1 512.5,656.2 512.0,656.2 511.5,656.3 511.0,656.3 510.5,656.4 510.0,656.4 509.5,656.5 509.0,656.5 508.5,656.6 508.0,656.6 507.5,656.7 507.0,656.7 506.5,656.8 506.0,656.8 505.5,655.8 505.0,654.9 504.5,653.9 504.0,654.3 503.5,656.6 503.0,657.0 502.5,657.0 502.0,657.0 501.5,657.1 501.0,657.1 500.5,657.1 500.0,657.1 499.5,657.1 499.0,657.1 498.5,657.1 498.0,657.1 497.5,657.1 497.0,657.1 496.5,657.1 496.0,656.3 495.5,655.3 495.0,654.3 494.5,653.9 494.0,656.2 493.5,657.0 493.0,657.0 492.5,657.0 492.0,657.0 491.5,657.0 491.0,657.0 490.5,656.9 490.0,656.9" fill="#a6d0be"/><polyline points="489.6,646.5 490.0,641.1 490.5,641.1 491.0,641.2 491.5,641.2 492.0,641.2 492.5,641.2 493.0,641.2 493.5,641.2 494.0,639.7 494.5,637.0 495.0,637.2 495.5,638.2 496.0,639.1 496.5,640.0 497.0,641.0 497.5,641.3 498.0,641.3 498.5,641.3 499.0,641.3 499.5,641.3 500.0,641.3 500.5,641.3 501.0,641.3 501.5,641.3 502.0,641.2 502.5,641.2 503.0,641.2 503.5,640.2 504.0,637.5 504.5,636.9 505.0,637.7 505.5,638.6 506.0,639.5 506.5,640.4 507.0,640.9 507.5,640.9 508.0,640.8 508.5,640.8 509.0,640.7 509.5,640.7 510.0,640.6 510.5,640.6 511.0,640.5 511.5,640.5 512.0,640.4 512.5,640.4 513.0,639.9 513.5,637.2 514.0,635.7 514.5,636.6 515.0,637.5 515.5,638.4 516.0,639.2 516.5,640.0 517.0,639.9 517.5,639.9 518.0,639.8 518.5,639.8 519.0,639.7 519.5,639.7 520.0,639.7 520.5,639.6 521.0,639.6 521.5,639.6 522.0,639.5 522.5,639.5 523.0,637.0 523.5,634.8 524.0,635.7 524.5,636.6 525.0,637.5 525.5,638.5 526.0,639.4 526.5,639.4 527.0,639.4 527.5,639.4 528.0,639.4 528.5,639.4 529.0,639.4 529.5,639.5 530.0,639.5 530.5,639.5 531.0,639.5 531.5,639.5 532.0,639.6 532.5,637.7 533.0,635.0 533.5,635.7 534.0,636.6 534.5,637.6 535.0,638.5 535.5,639.5 536.0,639.8 536.5,639.8 537.0,639.8 537.5,639.9 538.0,639.9 538.5,639.9 539.0,640.0 539.5,640.0 540.0,640.0 540.5,640.0 541.0,640.1 541.5,640.1 542.0,638.8 542.5,636.1 543.0,636.0 543.5,636.9 544.0,637.9 544.5,638.8 545.0,639.7 545.5,640.2 546.0,640.2 546.5,640.2 547.0,640.2 547.5,640.2 548.0,640.2 548.5,640.2 549.0,640.2 549.5,640.2 550.0,640.2 550.5,640.2 551.0,640.2 551.5,639.4 552.0,636.7 552.5,635.8 553.0,636.7 553.5,637.6 554.0,638.5 554.5,639.4 555.0,640.0 555.5,640.0 556.0,640.0 556.5,640.0 557.0,639.9 557.5,639.9 558.0,639.9 558.5,639.9 559.0,639.8 559.5,639.8 560.0,639.8 560.5,639.8 561.0,639.6 561.5,636.9 562.0,635.2 562.5,636.1 563.0,637.0 563.5,637.9 564.0,638.8 564.5,639.7 565.0,639.7 565.5,639.7 566.0,639.7 566.5,639.7 567.0,639.7 567.5,639.7 568.0,639.7 568.5,639.7 569.0,639.8 569.5,639.8 570.0,639.8 570.5,639.8 571.0,637.6 571.5,635.1 572.0,636.1 572.5,637.0 573.0,638.0 573.5,639.0 574.0,639.9 574.5,640.1 575.0,640.2 575.5,640.2 576.0,640.3 576.5,640.3 577.0,640.4 577.5,640.4 578.0,640.5 578.5,640.5 579.0,640.6 579.5,640.6 580.0,640.7 580.5,639.1 581.0,636.5 581.5,636.8 582.0,637.8 582.5,638.8 583.0,639.7 583.5,640.7 584.0,641.1 584.5,641.1 585.0,641.2 585.5,641.2 586.0,641.3 586.5,641.3 587.0,641.4 587.5,641.4 588.0,641.4 588.5,641.5 589.0,641.5 589.5,641.5 590.0,640.5 590.5,637.8 591.0,637.3 591.5,638.3 592.0,639.2 592.5,640.1 593.0,641.1 593.5,641.6 594.0,641.6 594.5,641.6 595.0,641.6 595.5,641.6 596.0,641.6 596.5,641.6 597.0,641.6 597.5,641.6 598.0,641.6 598.5,641.6 599.0,641.5 599.5,641.0 600.0,638.3 600.5,637.0 601.0,637.9 601.5,638.8 602.0,639.7 602.5,640.6 603.0,641.3 603.5,641.3 604.0,641.3 604.5,641.3 605.0,641.2 605.5,641.2 606.0,641.2 606.5,641.2 607.0,641.1 607.5,641.1 608.0,641.1 608.5,641.1 609.0,641.1 609.5,638.5 610.0,636.4 610.5,637.3 611.0,638.2 611.5,639.1 612.0,640.0 612.5,641.0 613.0,641.0 613.5,641.0 614.0,641.0 614.5,641.0 615.0,641.0 615.5,641.0 616.0,641.0 616.5,641.0 617.0,641.1 617.5,641.1 618.0,641.1 618.5,641.1 619.0,639.2 619.5,636.5 620.0,637.2 620.5,638.2 621.0,639.1 621.5,640.1 622.0,641.0 622.5,641.3 623.0,641.3 623.5,641.4 624.0,641.4 624.5,641.4 625.0,641.4 625.5,641.5 626.0,641.5 626.5,641.5 627.0,641.5 627.5,641.6 628.0,641.6 628.5,640.2 629.0,637.6 629.5,637.5 630.0,638.4 630.5,639.4 631.0,640.3 631.5,641.2 632.0,641.7 632.5,641.7 633.0,641.7 633.5,641.7 634.0,641.7 634.5,641.7 635.0,641.7 635.5,641.6 636.0,641.6 636.5,641.6 637.0,641.6 637.5,641.6 638.0,640.7 638.5,638.0 639.0,637.1 639.5,638.0 640.0,638.9 640.5,639.8 641.0,640.7 641.5,641.3 642.0,641.2 642.5,641.2 643.0,641.1 643.5,641.1 644.0,641.0 644.5,641.0 645.0,640.9 645.5,640.9 646.0,640.8 646.5,640.8 647.0,640.7 647.5,640.5 648.0,637.7 648.5,636.0 649.0,636.9 649.5,637.8 650.0,638.6 650.5,639.5 651.0,640.3 651.5,640.2 652.0,640.2 652.5,640.2 653.0,640.1 653.5,640.1 654.0,640.0 654.5,640.0 655.0,640.0 655.5,639.9 656.0,639.9 656.5,639.9 657.0,639.8 657.5,637.5 658.0,635.1 658.5,636.0 659.0,636.9 659.5,637.8 660.0,638.7 660.5,639.6 661.0,639.7 661.5,639.7 662.0,639.7 662.5,639.7 663.0,639.7 663.5,639.8 664.0,639.8 664.5,639.8 665.0,639.8 665.5,639.8 666.0,639.8 666.5,639.8 667.0,638.1 667.5,635.5 668.0,635.9 668.5,636.8 669.0,637.8 669.5,638.7 670.0,639.6 670.5,640.0 671.0,640.0 671.5,640.0 672.0,640.1 672.5,640.1 673.0,640.1 673.5,640.1 674.0,640.1 674.5,640.2 675.0,640.2 675.5,640.2 676.0,640.2 676.5,639.1 677.0,636.4 677.5,636.0 678.0,636.9 678.5,637.9 679.0,638.8 679.5,639.7 680.0,640.2 680.5,640.2 681.0,640.2 681.5,640.2 682.0,640.2 682.5,640.2 683.0,640.2 683.5,640.2 684.0,640.1 684.5,640.1 685.0,640.1 685.5,640.1 686.0,639.5 686.5,636.8 687.0,635.6 687.5,636.5 688.0,637.4 688.5,638.2 689.0,639.1 689.5,639.8 690.0,639.8 690.5,639.8 691.0,639.8 691.5,639.7 692.0,639.7 692.5,639.7 693.0,639.6 693.5,639.6 694.0,639.6 694.5,639.5 695.0,639.5 695.5,639.5 696.0,636.9 696.5,634.8 697.0,635.7 697.5,636.6 698.0,637.5 698.5,638.5 699.0,639.4 699.5,639.4 700.0,639.4 700.5,639.4 701.0,639.4 701.5,639.4 702.0,639.4 702.5,639.4 703.0,639.4 703.5,639.4 704.0,639.5 704.5,639.5 705.0,639.5 705.5,637.5 706.0,634.9 706.5,635.7 707.0,636.6 707.5,637.6 708.0,638.6 708.5,639.5 709.0,639.8 709.5,639.8 710.0,639.9 710.5,639.9 711.0,640.0 711.5,640.0 712.0,640.1 712.5,640.1 713.0,640.2 713.5,640.2 714.0,640.3 714.5,640.3 715.0,639.0 715.5,636.3 716.0,636.4 716.5,637.4 717.0,638.3 717.5,639.3 718.0,640.3 718.5,640.8 719.0,640.8 719.5,640.8 720.0,640.9 720.5,640.9 721.0,641.0 721.5,641.0 722.0,641.0 722.5,641.1 723.0,641.1 723.5,641.1 724.0,641.2 724.5,640.3 725.0,637.7 725.5,636.9 726.0,637.8 726.5,638.8 727.0,639.7 727.5,640.6 728.0,641.3 728.5,641.3 729.0,641.3 729.5,641.3 730.0,641.3 730.5,641.3 731.0,641.3 731.5,641.2 732.0,641.2 732.5,641.2 733.0,641.2 733.5,641.2 734.0,640.9 734.5,638.2 735.0,636.6 736.3,639.8 737.3,640.0 738.2,640.3 739.2,640.5 740.2,640.8 741.2,641.0 742.2,641.3 743.1,641.5 744.1,641.8 745.1,642.0 746.1,642.3 747.1,642.5 748.0,642.8 749.0,643.0 750.0,641.7 750.5,641.8 751.0,641.8 751.5,641.8 752.0,641.9 752.5,641.9 753.0,641.9 753.5,640.2 754.0,637.6 754.5,638.0 755.0,639.0 755.5,639.9 756.0,640.9 756.5,641.8 757.0,642.2 757.5,642.2 758.0,642.2 758.5,642.2 759.0,642.2 759.5,642.3 760.0,642.3 760.5,642.3 761.0,642.3 761.5,642.3 762.0,642.3 762.5,642.2 763.0,641.1 763.5,638.4 764.0,638.0 764.5,638.9 765.0,639.8 765.5,640.7 766.0,641.6 766.5,642.0 767.0,642.0 767.5,642.0 768.0,641.9 768.5,641.9 769.0,641.8 769.5,641.8 770.0,641.7 770.5,641.7 771.0,641.6 771.5,641.6 772.0,641.5 772.5,640.9 773.0,638.2 773.5,637.0 774.0,637.8 774.5,638.7 775.0,639.6 775.5,640.5 776.0,641.1 776.5,641.1 777.0,641.1 777.5,641.0 778.0,641.0 778.5,640.9 779.0,640.9 779.5,640.9 780.0,640.9 780.5,640.8 781.0,640.8 781.5,640.8 782.0,640.8 782.5,638.1 783.0,636.1 783.5,637.1 784.0,638.0 784.5,638.9 785.0,639.8 785.5,640.8 786.0,640.8 786.5,640.8 787.0,640.8 787.5,640.8 788.0,640.8 788.5,640.8 789.0,640.9 789.5,640.9 790.0,640.9 790.5,640.9 791.0,640.9 791.5,641.0 792.0,638.9 792.5,636.3 793.0,637.1 793.5,638.1 794.0,639.0 794.5,640.0 795.0,640.9 795.5,641.1 796.0,641.2 796.5,641.2 797.0,641.2 797.5,641.2 798.0,641.2 798.5,641.2 799.0,641.2 799.5,641.2 800.0,641.2 800.5,641.2 801.0,641.2 801.5,639.7 802.0,637.0 802.5,637.0 803.0,637.9 803.5,638.8 804.0,639.7 804.5,640.6 805.0,641.0 805.5,641.0 806.0,640.9 806.5,640.9 807.0,640.9 807.5,640.8 808.0,640.8 808.5,640.7 809.0,640.7 809.5,640.6 810.0,640.6 810.5,640.5 811.0,639.6 811.5,636.8 812.0,636.1 812.5,636.9 813.0,637.8 813.5,638.7 814.0,639.6 814.5,640.1 815.0,640.1 815.5,640.0 816.0,640.0 816.5,639.9 817.0,639.9 817.5,639.9 818.0,639.8 818.5,639.8 819.0,639.8 819.5,639.8 820.0,639.8 820.5,639.4 821.0,636.7 821.5,635.2 822.0,636.1 822.5,637.1 823.0,638.0 823.5,638.9 824.0,639.7 824.5,639.7 825.0,639.8 825.5,639.8 826.0,639.8 826.5,639.8 827.0,639.8 827.5,639.9 828.0,639.9 828.5,639.9 829.0,640.0 829.5,640.0 830.0,640.0 830.5,637.7 831.0,635.4 831.5,636.3 832.0,637.3 832.5,638.3 833.0,639.2 833.5,640.2 834.0,640.3 834.5,640.3 835.0,640.4 835.5,640.4 836.0,640.4 836.5,640.5 837.0,640.5 837.5,640.5 838.0,640.5 838.5,640.6 839.0,640.6 839.5,640.6 840.0,638.8 840.5,636.1 841.0,636.6 841.5,637.5 842.0,638.5 842.5,639.4 843.0,640.3 843.5,640.6 844.0,640.6 844.5,640.6 845.0,640.5 845.5,640.5 846.0,640.5 846.5,640.5 847.0,640.5 847.5,640.4 848.0,640.4 848.5,640.4 849.0,640.3 849.5,639.1 850.0,636.4 850.5,636.1 851.0,636.9 851.5,637.8 852.0,638.7 852.5,639.6 853.0,640.1 853.5,640.1 854.0,640.0 854.5,640.0 855.0,640.0 855.5,640.0 856.0,639.9 856.5,639.9 857.0,639.9 857.5,639.9 858.0,639.9 858.5,639.9 859.0,639.2 859.5,636.6 860.0,635.5 860.5,636.4 861.0,637.4 861.5,638.3 862.0,639.2 862.5,640.0 863.0,640.0 863.5,640.0 864.0,640.0 864.5,640.1 865.0,640.1 865.5,640.1 866.0,640.2 866.5,640.2 867.0,640.3 867.5,640.3 868.0,640.4 868.5,640.4 869.0,637.7 869.5,635.9 870.0,636.9 870.5,637.9 871.0,638.8 871.5,639.8 872.0,640.8 872.5,640.8 873.0,640.9 873.5,640.9 874.0,641.0 874.5,641.0 875.0,641.1 875.5,641.1 876.0,641.2 876.5,641.2 877.0,641.3 877.5,641.3 878.0,641.3 878.5,639.2 879.0,636.6 879.5,637.5 880.0,638.5 880.5,639.4 881.0,640.4 881.5,641.3 882.0,641.5 882.5,641.5 883.0,641.5 883.5,641.5 884.0,641.5 884.5,641.5 885.0,641.5 885.5,641.5 886.0,641.5 886.5,641.4 887.0,641.4 887.5,641.4 888.0,639.8 888.5,637.2 889.0,637.3 889.5,638.2 890.0,639.1 890.5,640.0 891.0,640.9 891.5,641.2 892.0,641.2 892.5,641.2 893.0,641.1 893.5,641.1 894.0,641.1 894.5,641.1 895.0,641.1 895.5,641.1 896.0,641.0 896.5,641.0 897.0,641.0 897.5,640.1 898.0,637.4 898.5,636.7 899.0,637.7 899.5,638.6 900.0,639.5 900.5,640.4 901.0,641.0 901.5,641.1 902.0,641.1 902.5,641.1 903.0,641.1 903.5,641.2 904.0,641.2 904.5,641.2 905.0,641.3 905.5,641.3 906.0,641.3 906.5,641.4 907.0,641.0 907.5,638.4 908.0,637.0 908.5,638.0 909.0,639.0 909.5,639.9 910.0,640.9 910.5,641.8 911.0,641.8 911.5,641.8 912.0,641.9 912.5,641.9 913.0,642.0 913.5,642.0 914.0,642.1 914.5,642.1 915.0,642.1 915.5,642.2 916.0,642.2 916.5,642.2 917.0,639.8 917.5,637.6 918.0,638.6 918.5,639.5 919.0,640.4 919.5,641.4 920.0,642.3 920.5,642.4 921.0,642.4 921.5,642.4 922.0,642.4 922.5,642.4 923.0,642.3 923.5,642.3 924.0,642.3 924.5,642.3 925.0,642.3 925.5,642.2 926.0,642.2 926.5,640.3 927.0,637.6 927.5,638.1 928.0,639.0 928.5,639.9 929.0,640.8 929.5,641.7 930.0,641.9 930.5,641.9 931.0,641.8 931.5,641.8 932.0,641.8 932.5,641.7 933.0,641.7 933.5,641.6 934.0,641.6 934.5,641.6 935.0,641.5 935.5,641.5 936.0,640.2 936.5,637.5 937.0,637.2 937.5,638.1 938.0,639.0 938.5,640.0 939.0,640.9 939.5,641.3 940.0,641.3 940.5,641.3 941.0,641.3 941.5,641.3 942.0,641.3 942.5,641.3 943.0,641.3 943.5,641.3 944.0,641.4 944.5,641.4 945.0,641.4 945.5,640.7 946.0,638.1 946.5,637.1 947.0,638.0 947.5,639.0 948.0,639.9 948.5,640.9 949.0,641.6 949.5,641.6 950.0,641.6 950.5,641.7 951.0,641.7 951.5,641.7 952.0,641.8 952.5,641.8 953.0,641.8 953.5,641.8 954.0,641.8 954.5,641.9 955.0,641.8 955.5,639.1 956.0,637.3 956.5,638.3 957.0,639.2 957.5,640.1 958.0,641.0 958.5,641.9 959.0,641.9 959.5,641.9 960.0,641.9 960.5,641.9 961.0,641.9 961.5,641.8 962.0,641.8 962.5,641.8 963.0,641.8 963.5,641.7 964.0,641.7 964.5,641.6 965.0,639.4 965.5,636.8 966.0,637.6 966.5,638.5 967.0,639.4 967.5,640.3 968.0,641.1 968.5,641.2 969.0,641.2 969.5,641.1 970.0,641.1 970.5,641.0 971.0,641.0 971.5,640.9 972.0,640.9 972.5,640.8 973.0,640.8 973.5,640.7 974.0,640.7 974.5,639.0 975.0,636.3 975.5,636.5 976.0,637.4 976.5,638.2 977.0,639.1 977.5,640.0 978.0,640.4 978.5,640.3 979.0,640.3 979.5,640.3 980.0,640.3 980.5,640.3 981.0,640.3 981.5,640.3 982.0,640.3 982.5,640.3 983.0,640.3 983.5,640.3 984.0,639.3 984.5,636.6 985.0,636.0 985.5,637.0 986.0,637.9 986.5,638.9 987.0,639.8 987.5,640.4 988.0,640.4 988.5,640.5 989.0,640.5 989.5,640.5 990.0,640.5 990.5,640.6 991.0,640.6 991.5,640.6 992.0,640.6 992.5,640.7 993.0,640.7 993.5,640.3 994.0,637.6 994.5,636.3 995.0,637.2 995.5,638.2 996.0,639.1 996.5,640.0 997.0,640.8 997.5,640.8 998.0,640.8 998.5,640.8 999.0,640.8 999.5,640.8 1000.0,640.8 1000.5,640.8 1001.0,640.7 1001.5,640.7 1002.0,640.7 1002.5,640.7 1003.0,640.7 1003.5,638.1 1004.0,635.9 1004.5,636.8 1005.0,637.7 1005.5,638.6 1006.0,639.5 1006.5,640.3 1007.0,640.4 1007.5,640.3 1008.0,640.3 1008.5,640.2 1009.0,640.2 1009.5,640.1 1010.0,640.1 1010.5,640.0 1011.0,640.0 1011.5,640.0 1012.0,639.9 1012.5,639.9 1013.0,637.9 1013.5,635.2 1014.0,635.8 1014.5,636.7 1015.0,637.6 1015.5,638.5 1016.0,639.4 1016.5,639.7 1017.0,639.6 1017.5,639.6 1018.0,639.6 1018.5,639.6 1019.0,639.6 1020.3,636.2 1021.2,636.5 1022.2,636.7 1023.1,637.0 1024.1,637.2 1025.0,637.4 1026.0,637.7 1026.9,637.9 1027.9,638.2 1028.9,638.4 1029.8,638.7 1030.8,638.9 1031.7,639.1 1032.7,639.4 1033.6,639.6 1034.6,639.9 1035.5,640.1 1036.5,640.3 1037.4,640.6 1038.4,640.8 1039.4,641.1 1040.3,641.3 1041.3,641.6 1042.2,641.8 1043.2,642.0 1044.1,642.3 1045.1,642.5 1046.0,642.8 1047.5,642.4 1048.0,642.4 1048.5,642.4 1049.0,642.3 1049.5,642.3 1050.0,642.2 1050.5,642.2 1051.0,642.1 1051.5,640.0 1052.0,637.2 1052.5,638.1 1053.0,639.0 1053.5,639.9 1054.0,640.7 1054.5,641.6 1055.0,641.8 1055.5,641.7 1056.0,641.7 1056.5,641.6 1057.0,641.6 1057.5,641.6 1058.0,641.6 1058.5,641.5 1059.0,641.5 1059.5,641.5 1060.0,641.5 1060.5,641.5 1061.0,639.9 1061.5,637.2 1062.0,637.5 1062.5,638.4 1063.0,639.4 1063.5,640.3 1064.0,641.3 1064.5,641.7 1065.0,641.7 1065.5,641.7 1066.0,641.8 1066.5,641.8 1067.0,641.9 1067.5,641.9 1068.0,642.0 1068.5,642.0 1069.0,642.1 1069.5,642.1 1070.0,642.2 1070.5,641.2 1071.0,638.5 1071.5,638.1 1072.0,639.0 1072.5,640.0 1073.0,640.9 1073.5,641.9 1074.0,642.5 1074.5,642.5 1075.0,642.5 1075.5,642.5 1076.0,642.5 1076.5,642.5 1077.0,642.5 1077.5,642.5 1078.0,642.5 1078.5,642.4 1079.0,642.4 1079.5,642.4 1080.0,642.3 1080.5,639.6 1081.0,637.7 1081.5,638.5 1082.0,639.4 1082.5,640.3 1083.0,641.2 1083.5,642.0 1084.0,642.0 1084.5,641.9 1085.0,641.9 1085.5,641.8 1086.0,641.8 1086.5,641.7 1087.0,641.7 1087.5,641.7 1088.0,641.6 1088.5,641.6 1089.0,641.6 1089.5,641.5 1090.0,639.4 1090.5,636.7 1091.0,637.6 1091.5,638.5 1092.0,639.5 1092.5,640.4 1093.0,641.3 1093.5,641.5 1094.9,642.6 1095.8,642.7 1096.8,642.8 1097.8,642.9 1098.7,643.0 1099.7,643.0 1100.6,643.1 1101.6,643.2 1102.6,643.3 1103.5,643.4 1104.5,643.5 1105.0,643.5 1105.5,643.5 1106.0,643.5 1106.5,643.5 1107.0,643.5 1107.5,643.5 1108.0,643.5 1108.5,643.5 1109.0,643.0 1109.5,640.3 1110.0,639.1 1110.5,640.0 1111.0,640.9 1111.5,641.8 1112.0,642.8 1112.5,643.5 1113.0,643.5 1113.5,643.5 1114.0,643.5 1114.5,643.5 1115.0,643.5 1115.5,643.5 1156.2,518.2 1287.0,644.0 1289.0,641.0 1291.0,640.0 1293.0,639.5 1294.5,635.8 1296.5,640.0 1300.0,640.0 1302.0,640.5 1303.5,636.3 1305.0,640.0 1307.0,639.2" fill="none" stroke="#3f4fb2" stroke-width="1.25" stroke-linejoin="round"/></svg>
<div class="t" style="left:446.59px;top:519.00px;font-size:15.94px;color:#666;transform:scaleX(0.9834);">-20</div>
<div class="t" style="left:446.59px;top:588.00px;font-size:15.94px;color:#666;transform:scaleX(0.9834);">-30</div>
<div class="t" style="left:446.59px;top:657.00px;font-size:15.94px;color:#666;transform:scaleX(0.9834);">-40</div>
<div class="t" style="left:592.46px;top:704.00px;font-size:13.19px;color:#555;transform:scaleX(0.9034);">Sep 2024</div>
<div class="t" style="left:881.15px;top:704.00px;font-size:13.19px;color:#555;transform:scaleX(0.9335);">Oct 2024</div>
<div class="t" style="left:1177.83px;top:704.00px;font-size:13.19px;color:#555;transform:scaleX(0.9201);">Nov 2024</div>
<div class="t" style="left:867.26px;top:726.00px;font-size:15.51px;color:#666;transform:scaleX(0.9968);">Datetime</div>
<div class="t" style="left:427.47px;top:659.60px;font-size:15.94px;color:#666;transform:rotate(-90deg) scaleX(0.9453)">Average Temperature</div>
</body></html>
